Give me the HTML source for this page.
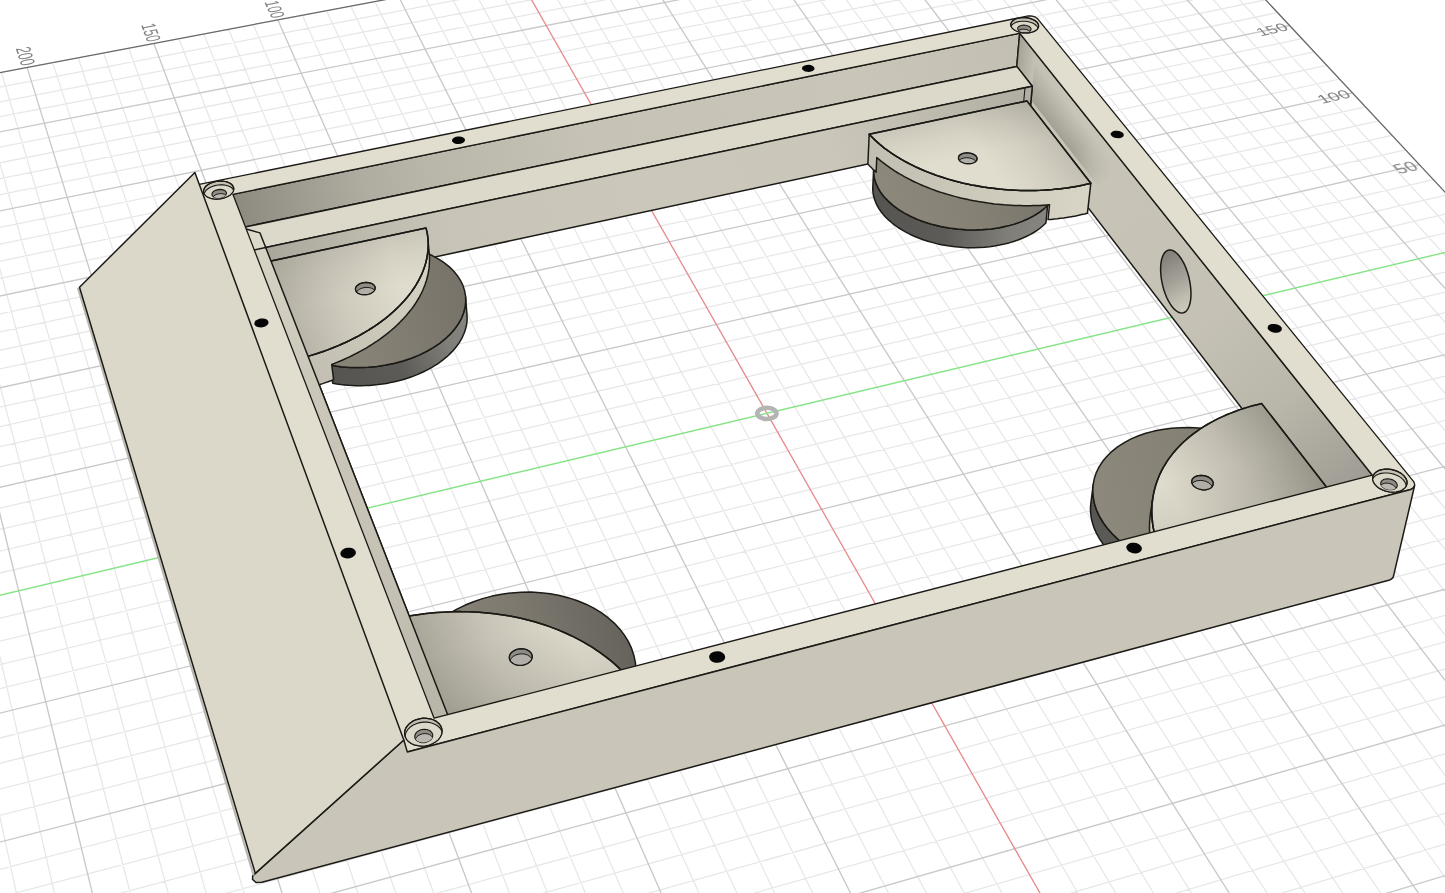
<!DOCTYPE html>
<html><head><meta charset="utf-8"><title>viewport</title>
<style>html,body{margin:0;padding:0;background:#fff;overflow:hidden}svg{display:block}text{font-family:"Liberation Sans",sans-serif}</style>
</head><body>
<svg width="1445" height="893" viewBox="0 0 1445 893">
<rect width="1445" height="893" fill="#fff"/>
<path d="M1133.4 -141.9L2130.1 926.3M1112.7 -137.9L2100.8 936M1091.9 -134L2071.4 945.8M1050 -126.1L2011.9 965.6M1028.9 -122.1L1981.8 975.6M1007.7 -118.1L1951.6 985.7M986.4 -114L1921.1 995.9M943.5 -105.9L1859.6 1016.4M922 -101.9L1828.5 1026.7M900.3 -97.8L1797.1 1037.1M878.6 -93.7L1765.6 1047.6M834.8 -85.4L1701.9 1068.9M812.8 -81.2L1669.7 1079.6M790.6 -77L1637.3 1090.4M768.4 -72.8L1604.6 1101.3M723.7 -64.4L1538.6 1123.2M701.1 -60.1L1505.3 1134.4M678.5 -55.8L1471.7 1145.5M655.8 -51.5L1437.8 1156.8M610 -42.9L1369.4 1179.6M587 -38.5L1334.8 1191.1M563.9 -34.1L1300 1202.7M540.6 -29.7L1264.9 1214.4M493.8 -20.9L1193.9 1238M470.3 -16.4L1158.1 1250M446.6 -11.9L1121.9 1262M422.8 -7.4L1085.5 1274.1M374.9 1.6L1011.9 1298.7M350.8 6.2L974.6 1311.1M326.6 10.7L937.1 1323.6M302.3 15.3L899.3 1336.2M253.3 24.6L822.8 1361.6M228.6 29.3L784.1 1374.5M203.9 34L745.2 1387.5M179 38.7L705.9 1400.6M128.8 48.2L626.4 1427.1M103.6 52.9L586.2 1440.5M78.2 57.7L545.6 1454M52.7 62.6L504.8 1467.6M1.4 72.3L422.1 1495.1M-24.5 77.2L380.2 1509M-50.5 82.1L338.1 1523.1M-76.6 87L295.5 1537.2M-129.1 96.9L209.5 1565.9M-155.6 102L165.9 1580.4M-182.2 107L122 1595M-209 112L77.7 1609.8M-262.8 122.2L-12 1639.7M-289.9 127.4L-57.4 1654.8M-317.2 132.5L-103.2 1670M-344.6 137.7L-149.3 1685.4M-399.8 148.1L-242.9 1716.5M-427.6 153.4L-290.2 1732.3M-455.5 158.7L-338 1748.2M-483.6 164L-386.1 1764.3M-540.2 174.7L-483.7 1796.8M-568.7 180.1L-533.2 1813.2M2130.1 926.3L-533.2 1813.2M2105.1 899.5L-534.2 1767.9M2080.5 873.2L-535.1 1723.5M2032.7 821.9L-537 1638M2009.5 797L-537.9 1596.6M1986.6 772.5L-538.8 1556.2M1964.1 748.4L-539.6 1516.7M1920.3 701.5L-541.3 1440.2M1899 678.6L-542.1 1403.2M1878 656.1L-542.9 1367M1857.4 634L-543.6 1331.5M1817.1 590.8L-545.1 1262.8M1797.5 569.8L-545.9 1229.4M1778.1 549.1L-546.6 1196.8M1759.1 528.7L-547.3 1164.8M1721.9 488.9L-548.6 1102.6M1703.8 469.4L-549.3 1072.5M1685.9 450.3L-549.9 1042.9M1668.3 431.4L-550.6 1013.8M1633.9 394.5L-551.8 957.4M1617.1 376.5L-552.4 930M1600.6 358.8L-553 903M1584.2 341.3L-553.5 876.6M1552.3 307.1L-554.7 825.1M1536.7 290.3L-555.2 800M1521.3 273.8L-555.7 775.4M1506.1 257.6L-556.3 751.2M1476.4 225.7L-557.3 704.1M1461.9 210.1L-557.8 681.1M1447.5 194.8L-558.3 658.5M1433.4 179.6L-558.8 636.3M1405.6 149.9L-559.7 592.9M1392.1 135.3L-560.2 571.8M1378.7 120.9L-560.6 551M1365.4 106.8L-561.1 530.5M1339.5 79L-561.9 490.5M1326.8 65.4L-562.4 471M1314.2 51.9L-562.8 451.7M1301.9 38.6L-563.2 432.8M1277.5 12.6L-564 395.8M1265.6 -0.2L-564.4 377.7M1253.9 -12.8L-564.8 359.9M1242.2 -25.3L-565.2 342.3M1219.4 -49.7L-565.9 308M1208.2 -61.7L-566.3 291.2M1197.1 -73.6L-566.6 274.6M1186.2 -85.3L-567 258.3M1164.7 -108.3L-567.7 226.4M1154.2 -119.6L-568 210.7M1143.7 -130.8L-568.4 195.3M1133.4 -141.9L-568.7 180.1" stroke="#e7e7e7" stroke-width="1.25" fill="none"/>
<path d="M1071 -130L2041.7 955.7M965 -110L1890.4 1006.1M856.8 -89.5L1733.9 1058.2M746.1 -68.6L1571.7 1112.2M633 -47.2L1403.7 1168.2M398.9 -2.9L1048.8 1286.4M277.9 20L861.2 1348.8M153.9 43.4L666.3 1413.8M27.1 67.4L463.6 1481.3M-102.8 92L252.7 1551.5M-235.8 117.1L33 1624.7M-372.1 142.9L-195.9 1700.9M-511.8 169.3L-434.7 1780.4M2056.4 847.3L-536.1 1680.3M1942.1 724.8L-540.5 1478M1837.1 612.3L-544.4 1296.8M1740.4 508.6L-548 1133.4M1651 412.8L-551.2 985.4M1568.2 324.1L-554.1 850.6M1419.4 164.6L-559.2 614.4M1352.4 92.8L-561.5 510.3M1289.6 25.5L-563.6 414.2M1230.7 -37.6L-565.5 325.1M1175.4 -96.9L-567.3 242.2" stroke="#c9c9c9" stroke-width="1.35" fill="none"/>
<path d="M517.3 -25.3L1229.6 1226.2" stroke="#e68a8a" stroke-width="1.3" fill="none"/>
<path d="M1491.2 241.5L-556.8 727.4" stroke="#86e386" stroke-width="1.4" fill="none"/>
<path d="M1133.4 -141.9L-568.7 180.1M1133.4 -141.9L2130.1 926.3" stroke="#686868" stroke-width="1.25" fill="none"/>
<ellipse cx="766.9" cy="413.4" rx="9.6" ry="5.6" fill="none" stroke="#b4b4b4" stroke-width="4.6"/>
<g filter="url(#noop)">
<text transform="matrix(0.4196 1.3558 -2.5639 0.4844 28.01 65.07)" font-size="7.9" text-anchor="end" dominant-baseline="central" fill="#808080" opacity="0.98">200</text>
<text transform="matrix(0.4962 1.3246 -2.5043 0.4732 154.71 41.13)" font-size="7.9" text-anchor="end" dominant-baseline="central" fill="#808080" opacity="0.98">150</text>
<text transform="matrix(0.5692 1.2944 -2.4467 0.4623 278.47 17.75)" font-size="7.9" text-anchor="end" dominant-baseline="central" fill="#808080" opacity="0.98">100</text>
<text transform="matrix(2.2196 -0.4655 1.2134 1.3032 1286.30 26.23)" font-size="7.9" text-anchor="end" dominant-baseline="central" fill="#808080" opacity="0.98">150</text>
<text transform="matrix(2.2777 -0.4969 1.2947 1.3905 1348.97 93.53)" font-size="7.9" text-anchor="end" dominant-baseline="central" fill="#808080" opacity="0.98">100</text>
<text transform="matrix(2.3387 -0.5316 1.3844 1.4868 1415.91 165.42)" font-size="7.9" text-anchor="end" dominant-baseline="central" fill="#808080" opacity="0.98">50</text>
</g>
<defs>
<filter id="noop" x="0" y="0" width="1445" height="893" filterUnits="userSpaceOnUse"><feOffset dx="0" dy="0"/></filter>
<linearGradient id="gbu" gradientUnits="userSpaceOnUse" x1="235.8" y1="214.7" x2="1018" y2="53"><stop offset="0" stop-color="#98958b"/><stop offset="0.1" stop-color="#a7a499"/><stop offset="0.25" stop-color="#b9b6aa"/><stop offset="0.45" stop-color="#c6c3b6"/><stop offset="0.8" stop-color="#c9c6b9"/><stop offset="1" stop-color="#c3c0b3"/></linearGradient>
<linearGradient id="ao1" gradientUnits="userSpaceOnUse" x1="235.4" y1="211.5" x2="362.7" y2="193"><stop offset="0" stop-color="rgb(90,88,79)" stop-opacity="0.18"/><stop offset="1" stop-color="rgb(90,88,79)" stop-opacity="0"/></linearGradient>
<linearGradient id="gr" gradientUnits="userSpaceOnUse" x1="1016" y1="75.3" x2="1362.7" y2="519.7"><stop offset="0" stop-color="#c4c1b4"/><stop offset="0.12" stop-color="#c8c5b8"/><stop offset="0.55" stop-color="#c5c2b5"/><stop offset="0.75" stop-color="#b9b6aa"/><stop offset="0.9" stop-color="#a5a399"/><stop offset="1" stop-color="#96948b"/></linearGradient>
<linearGradient id="mfg" gradientUnits="userSpaceOnUse" x1="1082.1" y1="145.1" x2="1108.9" y2="179.2"><stop offset="0" stop-color="#fff"/><stop offset="1" stop-color="#000"/></linearGradient><mask id="mfade" maskUnits="userSpaceOnUse" x="0" y="0" width="1445" height="893"><rect width="1445" height="893" fill="url(#mfg)"/></mask>
<linearGradient id="ao2" gradientUnits="userSpaceOnUse" x1="1062.2" y1="140" x2="1083.2" y2="123.7"><stop offset="0" stop-color="rgb(90,88,79)" stop-opacity="0.34"/><stop offset="1" stop-color="rgb(90,88,79)" stop-opacity="0"/></linearGradient>
<linearGradient id="ao3" gradientUnits="userSpaceOnUse" x1="1018.3" y1="49.9" x2="1035.6" y2="51.4"><stop offset="0" stop-color="rgb(90,88,79)" stop-opacity="0.3"/><stop offset="1" stop-color="rgb(90,88,79)" stop-opacity="0"/></linearGradient>
<linearGradient id="gbl" gradientUnits="userSpaceOnUse" x1="269.4" y1="274.8" x2="1029.8" y2="112.8"><stop offset="0" stop-color="#a9a69b"/><stop offset="0.12" stop-color="#bbb8ac"/><stop offset="0.24" stop-color="#c8c5b8"/><stop offset="0.5" stop-color="#cbc8bb"/><stop offset="0.74" stop-color="#cac7ba"/><stop offset="0.86" stop-color="#c0bdb0"/><stop offset="1" stop-color="#b0ada2"/></linearGradient>
<linearGradient id="gh" gradientUnits="userSpaceOnUse" x1="1161.7" y1="259.5" x2="1189.7" y2="307.5"><stop offset="0" stop-color="#84827b"/><stop offset="0.45" stop-color="#a3a197"/><stop offset="0.8" stop-color="#c0bdb1"/><stop offset="1" stop-color="#cdc9bc"/></linearGradient>
<linearGradient id="gfsTL" gradientUnits="userSpaceOnUse" x1="332.7" y1="383.2" x2="467" y2="315.2"><stop offset="0" stop-color="#555450"/><stop offset="0.45" stop-color="#5c5b57"/><stop offset="0.8" stop-color="#7f7e78"/><stop offset="1" stop-color="#86857f"/></linearGradient>
<linearGradient id="gftTL" gradientUnits="userSpaceOnUse" x1="270.3" y1="325" x2="462" y2="283.3"><stop offset="0" stop-color="#8d887c"/><stop offset="0.5" stop-color="#868175"/><stop offset="1" stop-color="#77736a"/></linearGradient>
<linearGradient id="gtsTL" gradientUnits="userSpaceOnUse" x1="427.6" y1="245.6" x2="307" y2="375"><stop offset="0" stop-color="#d8d4c6"/><stop offset="0.5" stop-color="#ccc8ba"/><stop offset="1" stop-color="#c2beb1"/></linearGradient>
<linearGradient id="ao4" gradientUnits="userSpaceOnUse" x1="355.2" y1="243.1" x2="365.6" y2="292.2"><stop offset="0" stop-color="rgb(90,88,79)" stop-opacity="0.16"/><stop offset="0.45" stop-color="rgb(90,88,79)" stop-opacity="0.07200000000000001"/><stop offset="1" stop-color="rgb(90,88,79)" stop-opacity="0"/></linearGradient>
<linearGradient id="ao5" gradientUnits="userSpaceOnUse" x1="287.4" y1="312.5" x2="394.9" y2="270.8"><stop offset="0" stop-color="rgb(90,88,79)" stop-opacity="0.3"/><stop offset="0.45" stop-color="rgb(90,88,79)" stop-opacity="0.135"/><stop offset="1" stop-color="rgb(90,88,79)" stop-opacity="0"/></linearGradient>
<clipPath id="thTL"><path d="M355.7 290.7 L355.4 289 L355.8 287.3 L356.9 285.7 L358.7 284.4 L360.9 283.3 L363.5 282.6 L366.2 282.4 L368.8 282.6 L371.2 283.3 L373.1 284.3 L374.5 285.7 L375.2 287.3 L375.1 289 L374.4 290.6 L372.9 292.1 L370.9 293.4 L368.5 294.3 L365.8 294.7 L363.1 294.7 L360.5 294.3 L358.4 293.4 L356.7 292.2 L355.7 290.7Z"/></clipPath>
<linearGradient id="gfsTR" gradientUnits="userSpaceOnUse" x1="872.8" y1="187.3" x2="1045.9" y2="223"><stop offset="0" stop-color="#555450"/><stop offset="0.45" stop-color="#5c5b57"/><stop offset="0.8" stop-color="#7f7e78"/><stop offset="1" stop-color="#86857f"/></linearGradient>
<linearGradient id="gftTR" gradientUnits="userSpaceOnUse" x1="880.6" y1="192.1" x2="1051" y2="155"><stop offset="0" stop-color="#8d887c"/><stop offset="0.5" stop-color="#868175"/><stop offset="1" stop-color="#77736a"/></linearGradient>
<linearGradient id="gtsTR" gradientUnits="userSpaceOnUse" x1="1088.8" y1="200.7" x2="868.4" y2="151.5"><stop offset="0" stop-color="#d8d4c6"/><stop offset="0.5" stop-color="#ccc8ba"/><stop offset="1" stop-color="#c2beb1"/></linearGradient>
<linearGradient id="ao6" gradientUnits="userSpaceOnUse" x1="944.7" y1="118.3" x2="953.5" y2="159.5"><stop offset="0" stop-color="rgb(90,88,79)" stop-opacity="0.16"/><stop offset="0.45" stop-color="rgb(90,88,79)" stop-opacity="0.07200000000000001"/><stop offset="1" stop-color="rgb(90,88,79)" stop-opacity="0"/></linearGradient>
<linearGradient id="ao7" gradientUnits="userSpaceOnUse" x1="1060.9" y1="144.7" x2="1006.3" y2="187.1"><stop offset="0" stop-color="rgb(90,88,79)" stop-opacity="0.22"/><stop offset="0.45" stop-color="rgb(90,88,79)" stop-opacity="0.099"/><stop offset="1" stop-color="rgb(90,88,79)" stop-opacity="0"/></linearGradient>
<clipPath id="thTR"><path d="M959.2 160.1 L958.5 158.7 L958.5 157.2 L959.1 155.8 L960.5 154.5 L962.3 153.6 L964.6 153 L967 152.8 L969.6 153 L972 153.6 L974.1 154.5 L975.7 155.7 L976.7 157.1 L977.1 158.6 L976.8 160.1 L975.8 161.4 L974.2 162.5 L972.1 163.3 L969.7 163.7 L967.1 163.7 L964.6 163.3 L962.4 162.5 L960.5 161.5 L959.2 160.1Z"/></clipPath>
<linearGradient id="gfsR" gradientUnits="userSpaceOnUse" x1="1090.9" y1="502.9" x2="1153" y2="580.2"><stop offset="0" stop-color="#555450"/><stop offset="0.45" stop-color="#5c5b57"/><stop offset="0.8" stop-color="#7f7e78"/><stop offset="1" stop-color="#86857f"/></linearGradient>
<linearGradient id="gftR" gradientUnits="userSpaceOnUse" x1="1103.5" y1="523" x2="1294.6" y2="473.9"><stop offset="0" stop-color="#8d887c"/><stop offset="0.5" stop-color="#868175"/><stop offset="1" stop-color="#77736a"/></linearGradient>
<linearGradient id="gtsR" gradientUnits="userSpaceOnUse" x1="1183" y1="608.6" x2="1258.6" y2="421.4"><stop offset="0" stop-color="#d8d4c6"/><stop offset="0.5" stop-color="#ccc8ba"/><stop offset="1" stop-color="#c2beb1"/></linearGradient>
<linearGradient id="ao8" gradientUnits="userSpaceOnUse" x1="1308.9" y1="464.4" x2="1208" y2="542.7"><stop offset="0" stop-color="rgb(90,88,79)" stop-opacity="0.5"/><stop offset="0.45" stop-color="rgb(90,88,79)" stop-opacity="0.225"/><stop offset="1" stop-color="rgb(90,88,79)" stop-opacity="0"/></linearGradient>
<linearGradient id="ao9" gradientUnits="userSpaceOnUse" x1="1247.6" y1="532.6" x2="1229.8" y2="464.3"><stop offset="0" stop-color="rgb(90,88,79)" stop-opacity="0.18"/><stop offset="0.45" stop-color="rgb(90,88,79)" stop-opacity="0.081"/><stop offset="1" stop-color="rgb(90,88,79)" stop-opacity="0"/></linearGradient>
<clipPath id="thR"><path d="M1192.9 485 L1191.9 483.1 L1191.7 481.1 L1192.3 479.2 L1193.7 477.6 L1195.7 476.4 L1198.2 475.6 L1201.1 475.3 L1204 475.6 L1206.8 476.4 L1209.3 477.6 L1211.3 479.2 L1212.7 481.1 L1213.3 483 L1213.1 485 L1212.1 486.7 L1210.4 488.2 L1208.2 489.2 L1205.4 489.8 L1202.5 489.8 L1199.6 489.2 L1196.9 488.2 L1194.6 486.8 L1192.9 485Z"/></clipPath>
<linearGradient id="gfsBL" gradientUnits="userSpaceOnUse" x1="631.6" y1="714" x2="636.5" y2="687.9"><stop offset="0" stop-color="#555450"/><stop offset="0.45" stop-color="#5c5b57"/><stop offset="0.8" stop-color="#7f7e78"/><stop offset="1" stop-color="#86857f"/></linearGradient>
<linearGradient id="gftBL" gradientUnits="userSpaceOnUse" x1="411.2" y1="701.2" x2="630.1" y2="645"><stop offset="0" stop-color="#8e897d"/><stop offset="0.55" stop-color="#7d796f"/><stop offset="1" stop-color="#66635c"/></linearGradient>
<linearGradient id="gtsBL" gradientUnits="userSpaceOnUse" x1="407.3" y1="634.9" x2="658.8" y2="748.9"><stop offset="0" stop-color="#d8d4c6"/><stop offset="0.5" stop-color="#ccc8ba"/><stop offset="1" stop-color="#c2beb1"/></linearGradient>
<linearGradient id="ao10" gradientUnits="userSpaceOnUse" x1="433.3" y1="688.6" x2="573.3" y2="634.3"><stop offset="0" stop-color="rgb(90,88,79)" stop-opacity="0.42"/><stop offset="0.45" stop-color="rgb(90,88,79)" stop-opacity="0.189"/><stop offset="1" stop-color="rgb(90,88,79)" stop-opacity="0"/></linearGradient>
<linearGradient id="ao11" gradientUnits="userSpaceOnUse" x1="557.2" y1="713.1" x2="535.1" y2="628.2"><stop offset="0" stop-color="rgb(90,88,79)" stop-opacity="0.2"/><stop offset="0.45" stop-color="rgb(90,88,79)" stop-opacity="0.09000000000000001"/><stop offset="1" stop-color="rgb(90,88,79)" stop-opacity="0"/></linearGradient>
<clipPath id="thBL"><path d="M509.7 659.8 L509.3 657.6 L509.6 655.3 L510.8 653.2 L512.7 651.4 L515.3 649.9 L518.2 649 L521.3 648.7 L524.4 649 L527.2 649.9 L529.5 651.3 L531.2 653.2 L532.1 655.3 L532.2 657.5 L531.4 659.8 L529.8 661.8 L527.6 663.5 L524.8 664.6 L521.8 665.3 L518.6 665.3 L515.7 664.7 L513.1 663.5 L511 661.8 L509.7 659.8Z"/></clipPath>
<linearGradient id="gls" gradientUnits="userSpaceOnUse" x1="265.7" y1="247.5" x2="460.5" y2="747.7"><stop offset="0" stop-color="#d6d2c4"/><stop offset="0.25" stop-color="#cbc7ba"/><stop offset="0.7" stop-color="#c4c0b3"/><stop offset="1" stop-color="#b4b1a5"/></linearGradient>
<clipPath id="cb1"><path d="M203.8 193.1 L203.5 191.3 L203.8 189.5 L204.7 187.7 L206.1 186 L208.1 184.5 L210.5 183.2 L213.2 182.2 L216.2 181.5 L219.3 181.1 L222.3 181.1 L225.2 181.5 L227.8 182.2 L230 183.3 L231.8 184.6 L233 186.2 L233.7 187.9 L233.7 189.7 L233.2 191.5 L232 193.2 L230.3 194.9 L228.1 196.3 L225.5 197.5 L222.6 198.4 L219.6 198.9 L216.5 199.1 L213.5 198.8 L210.7 198.3 L208.3 197.4 L206.2 196.2 L204.7 194.7 L203.8 193.1Z"/></clipPath>
<clipPath id="cbh1"><path d="M212.1 195.2 L211.9 194.1 L212.3 192.9 L213.2 191.8 L214.6 190.8 L216.2 190.1 L218.1 189.6 L220.1 189.4 L222 189.6 L223.7 190.1 L225.1 190.8 L226 191.8 L226.5 192.9 L226.3 194 L225.7 195.2 L224.6 196.2 L223 197.1 L221.2 197.7 L219.3 198 L217.3 198 L215.5 197.7 L213.9 197.1 L212.7 196.3 L212.1 195.2Z"/></clipPath>
<clipPath id="cb2"><path d="M1012 27.8 L1011.1 26.3 L1010.8 24.7 L1011 23.2 L1011.8 21.8 L1013.1 20.5 L1014.9 19.3 L1017 18.5 L1019.5 17.9 L1022.2 17.6 L1025 17.6 L1027.8 17.9 L1030.5 18.6 L1032.9 19.5 L1035 20.6 L1036.7 21.9 L1037.9 23.4 L1038.5 24.9 L1038.6 26.5 L1038.1 28 L1037.1 29.4 L1035.5 30.6 L1033.5 31.6 L1031.2 32.3 L1028.5 32.8 L1025.7 32.9 L1022.9 32.8 L1020.2 32.3 L1017.6 31.5 L1015.3 30.5 L1013.4 29.2 L1012 27.8Z"/></clipPath>
<clipPath id="cbh2"><path d="M1018.3 30.1 L1017.8 29.1 L1017.7 28.1 L1018.2 27.1 L1019.1 26.3 L1020.4 25.7 L1022 25.3 L1023.8 25.1 L1025.6 25.3 L1027.3 25.7 L1028.8 26.3 L1030 27.1 L1030.8 28.1 L1031.1 29.1 L1030.8 30.1 L1030.2 31 L1029 31.7 L1027.6 32.2 L1025.9 32.5 L1024 32.5 L1022.2 32.2 L1020.6 31.7 L1019.3 31 L1018.3 30.1Z"/></clipPath>
<clipPath id="cb3"><path d="M1374.9 484.4 L1373.5 482.1 L1372.7 479.8 L1372.6 477.5 L1373.3 475.4 L1374.6 473.4 L1376.5 471.7 L1379 470.4 L1381.9 469.6 L1385.2 469.1 L1388.6 469.1 L1392.1 469.6 L1395.5 470.6 L1398.6 471.9 L1401.4 473.6 L1403.8 475.6 L1405.5 477.8 L1406.7 480.1 L1407.1 482.4 L1406.8 484.6 L1405.9 486.7 L1404.2 488.6 L1402 490.1 L1399.3 491.2 L1396.2 491.9 L1392.8 492.1 L1389.3 491.8 L1385.8 491.1 L1382.5 489.9 L1379.5 488.4 L1376.9 486.5 L1374.9 484.4Z"/></clipPath>
<clipPath id="cbh3"><path d="M1381.8 486.2 L1380.9 484.7 L1380.7 483.2 L1381 481.8 L1382 480.6 L1383.4 479.6 L1385.3 479 L1387.4 478.8 L1389.7 479 L1391.9 479.6 L1393.9 480.6 L1395.5 481.8 L1396.6 483.2 L1397.2 484.7 L1397.2 486.2 L1396.5 487.5 L1395.3 488.6 L1393.6 489.4 L1391.6 489.8 L1389.4 489.8 L1387.1 489.4 L1385 488.7 L1383.2 487.6 L1381.8 486.2Z"/></clipPath>
<clipPath id="cb4"><path d="M405.2 736.8 L404.6 734 L404.7 731.2 L405.6 728.4 L407.3 725.8 L409.6 723.4 L412.4 721.4 L415.7 719.8 L419.3 718.8 L423.1 718.2 L426.8 718.3 L430.4 718.8 L433.8 720 L436.7 721.6 L439.1 723.7 L440.8 726 L441.8 728.7 L442.1 731.5 L441.6 734.3 L440.3 737 L438.4 739.6 L435.8 741.8 L432.7 743.6 L429.2 745 L425.5 745.8 L421.7 746.1 L417.9 745.7 L414.4 744.9 L411.2 743.5 L408.6 741.6 L406.5 739.3 L405.2 736.8Z"/></clipPath>
<clipPath id="cbh4"><path d="M415 738.2 L414.7 736.4 L415.1 734.6 L416.1 732.9 L417.6 731.4 L419.6 730.2 L421.9 729.5 L424.4 729.2 L426.8 729.5 L429 730.2 L430.7 731.3 L432 732.8 L432.7 734.5 L432.7 736.4 L432 738.2 L430.7 739.8 L428.9 741.1 L426.7 742.1 L424.3 742.6 L421.8 742.6 L419.5 742.1 L417.5 741.1 L416 739.8 L415 738.2Z"/></clipPath>
</defs>
<path d="M210 199 L1019.7 33.2 L1016.8 66.4 L215.2 233.2Z" fill="url(#gbu)" stroke="#1b1a16" stroke-width="1.5" stroke-linejoin="round" />
<path d="M210 199 L359.8 168.3 L363.4 202.4 L215.2 233.2Z" fill="url(#ao1)"/>
<path d="M1019.7 33.2 L1380.7 485.7 L1362.9 566.3 L1028.3 129.6 L1032.3 86.2 L1016.8 66.4Z" fill="url(#gr)" stroke="#1b1a16" stroke-width="1.5" stroke-linejoin="round" />
<g mask="url(#mfade)">
<path d="M1035.4 52.9 L1112.4 149.4 L1106.7 197.3 L1031 100Z" fill="url(#ao2)"/>
</g>
<path d="M1019.7 33.2 L1054 76.2 L1050.7 109.6 L1016.8 66.4Z" fill="url(#ao3)"/>
<path d="M215.2 233.2 L1016.8 66.4 L1032.3 86.2 L265.7 247.5 L465.4 760.2 L414.9 773.5Z" fill="#dcd8ca" stroke="#1b1a16" stroke-width="1.5" stroke-linejoin="round" />
<path d="M265.7 247.5 L1032.3 86.2 L1028.3 129.6 L271.8 292Z" fill="url(#gbl)" stroke="#1b1a16" stroke-width="1.5" stroke-linejoin="round" />
<path d="M1025 87.8 L1023.7 101.5" fill="none" stroke="#1b1a16" stroke-width="1.1" stroke-linecap="round" stroke-linejoin="round" />
<path d="M1161 262.8 L1161.6 259.6 L1162.4 256.9 L1163.5 254.5 L1164.7 252.6 L1166.2 251.2 L1167.8 250.3 L1169.6 249.9 L1171.4 250.1 L1173.4 250.8 L1175.3 252 L1177.3 253.8 L1179.3 256 L1181.2 258.7 L1183.1 261.8 L1184.8 265.2 L1186.3 268.9 L1187.7 272.9 L1188.8 277 L1189.7 281.1 L1190.4 285.3 L1190.8 289.4 L1191 293.4 L1190.9 297.1 L1190.5 300.6 L1189.9 303.8 L1189 306.5 L1187.9 308.8 L1186.6 310.7 L1185.2 312 L1183.5 312.8 L1181.7 313.1 L1179.9 312.8 L1177.9 312 L1176 310.7 L1174 308.9 L1172 306.6 L1170.2 303.9 L1168.4 300.9 L1166.7 297.5 L1165.2 293.8 L1163.9 290 L1162.8 286 L1161.9 281.9 L1161.2 277.8 L1160.8 273.8 L1160.6 269.9 L1160.7 266.2Z" fill="url(#gh)" stroke="#1b1a16" stroke-width="1.5" stroke-linejoin="round" />
<path d="M465.6 297.3 L465.7 299.9 L465.7 302.4 L465.4 305 L465 307.6 L464.4 310.2 L463.6 312.7 L462.7 315.3 L461.6 317.9 L460.3 320.4 L458.9 322.9 L457.3 325.4 L455.6 327.8 L453.6 330.2 L451.6 332.6 L449.3 334.9 L447 337.2 L444.5 339.4 L441.8 341.6 L439 343.7 L436.1 345.7 L433 347.7 L429.8 349.6 L426.6 351.4 L423.2 353.1 L419.7 354.8 L416 356.3 L412.4 357.8 L408.6 359.2 L404.7 360.5 L400.8 361.7 L396.8 362.7 L392.8 363.7 L388.7 364.6 L384.5 365.3 L380.3 366 L376.1 366.6 L371.9 367 L367.7 367.3 L363.5 367.5 L359.3 367.6 L355 367.6 L350.9 367.5 L346.7 367.2 L342.6 366.9 L338.5 366.4 L334.5 365.8 L330.5 365.2 L332.7 383.2 L336.7 383.9 L340.7 384.5 L344.7 384.9 L348.8 385.3 L352.9 385.5 L357.1 385.7 L361.3 385.7 L365.5 385.6 L369.7 385.4 L373.9 385 L378.1 384.6 L382.3 384.1 L386.4 383.4 L390.5 382.6 L394.6 381.8 L398.6 380.8 L402.6 379.7 L406.5 378.5 L410.3 377.2 L414.1 375.9 L417.8 374.4 L421.3 372.8 L424.8 371.2 L428.2 369.4 L431.5 367.6 L434.6 365.7 L437.7 363.8 L440.6 361.7 L443.3 359.6 L446 357.4 L448.5 355.2 L450.8 352.9 L453.1 350.6 L455.1 348.2 L457 345.8 L458.8 343.4 L460.3 340.9 L461.8 338.4 L463 335.8 L464.1 333.3 L465 330.7 L465.8 328.1 L466.4 325.5 L466.8 323 L467.1 320.4 L467.1 317.8 L467 315.2Z" fill="url(#gfsTL)" stroke="#1b1a16" stroke-width="1.5" stroke-linejoin="round" />
<path d="M270.3 325 L268.7 319.7 L267.8 314.3 L267.8 308.8 L268.5 303.3 L270 297.9 L272.3 292.5 L275.3 287.2 L278.9 282.1 L283.3 277.2 L288.2 272.5 L293.8 268.1 L299.9 263.9 L306.5 260.1 L313.5 256.6 L320.9 253.5 L328.7 250.8 L336.7 248.5 L345 246.7 L353.4 245.2 L361.9 244.3 L370.4 243.7 L378.9 243.7 L387.3 244.1 L395.6 244.9 L403.6 246.2 L411.4 248 L418.8 250.2 L425.9 252.8 L432.6 255.8 L438.7 259.1 L444.3 262.9 L449.4 266.9 L453.8 271.3 L457.6 275.9 L460.7 280.8 L463.1 285.9 L464.7 291.1 L465.6 296.4 L465.7 301.9 L465 307.4 L463.6 312.8 L461.4 318.3 L458.5 323.6 L454.8 328.8 L450.4 333.9 L445.3 338.7 L439.6 343.3 L433.2 347.6 L426.4 351.5 L419 355.1 L411.2 358.3 L403 361 L394.5 363.3 L385.8 365.1 L376.9 366.5 L367.9 367.3 L358.9 367.6 L350 367.4 L341.2 366.7 L332.6 365.5 L324.3 363.8 L316.4 361.7 L308.9 359 L301.9 356 L295.4 352.5 L289.5 348.7 L284.2 344.5 L279.6 340 L275.8 335.2 L272.6 330.2 L270.3 325Z" fill="url(#gftTL)" stroke="#1b1a16" stroke-width="1.5" stroke-linejoin="round" />
<path d="M427.9 239.1 L428 240.8 L428.1 242.5 L428.2 244.3 L428.1 246 L428.1 247.8 L428 249.5 L427.8 251.3 L427.6 253.1 L427.4 254.8 L427.1 256.6 L426.7 258.4 L426.4 260.2 L425.9 261.9 L425.4 263.7 L424.9 265.5 L424.3 267.3 L423.7 269 L423 270.8 L422.3 272.6 L421.6 274.4 L420.8 276.1 L419.9 277.9 L419 279.6 L418.1 281.4 L417.1 283.1 L416 284.9 L414.9 286.6 L413.8 288.3 L412.6 290.1 L411.4 291.8 L410.1 293.5 L408.8 295.2 L407.5 296.9 L406.1 298.6 L404.6 300.2 L403.1 301.9 L401.6 303.6 L400 305.2 L398.4 306.8 L396.8 308.4 L395.1 310 L393.3 311.6 L391.5 313.2 L389.7 314.8 L387.9 316.3 L386 317.9 L384 319.4 L382 320.9 L380 322.4 L378 323.8 L375.9 325.3 L373.7 326.7 L371.6 328.1 L369.4 329.5 L367.1 330.9 L364.9 332.3 L362.6 333.6 L360.2 334.9 L357.9 336.2 L355.5 337.5 L353 338.7 L350.6 340 L348.1 341.2 L345.5 342.4 L343 343.5 L340.4 344.7 L337.8 345.8 L335.2 346.9 L332.5 347.9 L329.8 349 L327.1 350 L324.4 351 L321.6 352 L318.9 352.9 L316.1 353.8 L313.2 354.7 L310.4 355.6 L307.6 356.4 L304.7 357.2 L308.7 387.9 L311.5 387.1 L314.3 386.2 L317.1 385.4 L319.9 384.5 L322.7 383.6 L325.5 382.6 L328.2 381.7 L330.9 380.7 L333.6 379.6 L331.7 364.5 L334.4 363.5 L337 362.4 L339.7 361.3 L342.2 360.2 L344.8 359 L347.3 357.9 L349.9 356.7 L352.3 355.5 L354.8 354.2 L357.2 353 L359.6 351.7 L362 350.4 L364.3 349.1 L366.6 347.8 L368.8 346.4 L371.1 345 L373.2 343.6 L375.4 342.2 L377.5 340.8 L379.6 339.3 L381.6 337.8 L383.6 336.3 L385.6 334.8 L387.5 333.3 L389.4 331.8 L391.3 330.2 L393.1 328.7 L394.9 327.1 L396.6 325.5 L398.3 323.9 L399.9 322.3 L401.5 320.6 L403.1 319 L404.6 317.3 L406.1 315.7 L407.5 314 L408.9 312.3 L410.3 310.6 L411.6 308.9 L412.9 307.2 L414.1 305.5 L415.2 303.8 L416.4 302 L417.4 300.3 L418.5 298.5 L419.5 296.8 L420.4 295 L421.3 293.3 L422.2 291.5 L423 289.7 L423.7 288 L424.4 286.2 L425.1 284.4 L425.7 282.6 L426.3 280.9 L426.8 279.1 L427.3 277.3 L427.7 275.5 L428.1 273.7 L428.4 272 L428.7 270.2 L429 268.4 L429.2 266.6 L429.3 264.9 L429.4 263.1 L429.5 261.4 L429.5 259.6 L429.5 257.8 L429.4 256.1 L429.3 254.4Z" fill="url(#gtsTL)" stroke="#1b1a16" stroke-width="1.5" stroke-linejoin="round" />
<path d="M267.6 261.7 L426 228.1 L426.6 230.4 L427.1 232.7 L427.5 235 L427.8 237.4 L428 239.7 L428.1 242.1 L428.2 244.4 L428.1 246.8 L428 249.2 L427.8 251.6 L427.5 254 L427.1 256.4 L426.7 258.8 L426.1 261.2 L425.5 263.6 L424.8 266 L423.9 268.4 L423.1 270.8 L422.1 273.2 L421 275.6 L419.8 278 L418.6 280.4 L417.3 282.7 L415.9 285.1 L414.4 287.5 L412.8 289.8 L411.2 292.1 L409.4 294.4 L407.6 296.7 L405.7 299 L403.7 301.3 L401.6 303.5 L399.5 305.7 L397.3 307.9 L395 310.1 L392.6 312.3 L390.2 314.4 L387.7 316.5 L385.1 318.6 L382.4 320.6 L379.7 322.6 L376.9 324.6 L374 326.6 L371 328.5 L368 330.4 L365 332.2 L361.8 334 L358.7 335.8 L355.4 337.5 L352.1 339.2 L348.7 340.9 L345.3 342.5 L341.8 344 L338.3 345.6 L334.8 347 L331.1 348.5 L327.5 349.9 L323.8 351.2 L320 352.5 L316.3 353.8 L312.4 354.9 L308.6 356.1 L304.7 357.2Z" fill="#dfdbcd" stroke="#1b1a16" stroke-width="1.5" stroke-linejoin="round" />
<path d="M267.6 261.7 L426 228.1 L426.6 230.4 L427.1 232.7 L427.5 235 L427.8 237.4 L428 239.7 L428.1 242.1 L428.2 244.4 L428.1 246.8 L428 249.2 L427.8 251.6 L427.5 254 L427.1 256.4 L426.7 258.8 L426.1 261.2 L425.5 263.6 L424.8 266 L423.9 268.4 L423.1 270.8 L422.1 273.2 L421 275.6 L419.8 278 L418.6 280.4 L417.3 282.7 L415.9 285.1 L414.4 287.5 L412.8 289.8 L411.2 292.1 L409.4 294.4 L407.6 296.7 L405.7 299 L403.7 301.3 L401.6 303.5 L399.5 305.7 L397.3 307.9 L395 310.1 L392.6 312.3 L390.2 314.4 L387.7 316.5 L385.1 318.6 L382.4 320.6 L379.7 322.6 L376.9 324.6 L374 326.6 L371 328.5 L368 330.4 L365 332.2 L361.8 334 L358.7 335.8 L355.4 337.5 L352.1 339.2 L348.7 340.9 L345.3 342.5 L341.8 344 L338.3 345.6 L334.8 347 L331.1 348.5 L327.5 349.9 L323.8 351.2 L320 352.5 L316.3 353.8 L312.4 354.9 L308.6 356.1 L304.7 357.2Z" fill="url(#ao4)"/>
<path d="M267.6 261.7 L426 228.1 L426.6 230.4 L427.1 232.7 L427.5 235 L427.8 237.4 L428 239.7 L428.1 242.1 L428.2 244.4 L428.1 246.8 L428 249.2 L427.8 251.6 L427.5 254 L427.1 256.4 L426.7 258.8 L426.1 261.2 L425.5 263.6 L424.8 266 L423.9 268.4 L423.1 270.8 L422.1 273.2 L421 275.6 L419.8 278 L418.6 280.4 L417.3 282.7 L415.9 285.1 L414.4 287.5 L412.8 289.8 L411.2 292.1 L409.4 294.4 L407.6 296.7 L405.7 299 L403.7 301.3 L401.6 303.5 L399.5 305.7 L397.3 307.9 L395 310.1 L392.6 312.3 L390.2 314.4 L387.7 316.5 L385.1 318.6 L382.4 320.6 L379.7 322.6 L376.9 324.6 L374 326.6 L371 328.5 L368 330.4 L365 332.2 L361.8 334 L358.7 335.8 L355.4 337.5 L352.1 339.2 L348.7 340.9 L345.3 342.5 L341.8 344 L338.3 345.6 L334.8 347 L331.1 348.5 L327.5 349.9 L323.8 351.2 L320 352.5 L316.3 353.8 L312.4 354.9 L308.6 356.1 L304.7 357.2Z" fill="url(#ao5)"/>
<path d="M267.6 261.7 L426 228.1 L426.6 230.4 L427.1 232.7 L427.5 235 L427.8 237.4 L428 239.7 L428.1 242.1 L428.2 244.4 L428.1 246.8 L428 249.2 L427.8 251.6 L427.5 254 L427.1 256.4 L426.7 258.8 L426.1 261.2 L425.5 263.6 L424.8 266 L423.9 268.4 L423.1 270.8 L422.1 273.2 L421 275.6 L419.8 278 L418.6 280.4 L417.3 282.7 L415.9 285.1 L414.4 287.5 L412.8 289.8 L411.2 292.1 L409.4 294.4 L407.6 296.7 L405.7 299 L403.7 301.3 L401.6 303.5 L399.5 305.7 L397.3 307.9 L395 310.1 L392.6 312.3 L390.2 314.4 L387.7 316.5 L385.1 318.6 L382.4 320.6 L379.7 322.6 L376.9 324.6 L374 326.6 L371 328.5 L368 330.4 L365 332.2 L361.8 334 L358.7 335.8 L355.4 337.5 L352.1 339.2 L348.7 340.9 L345.3 342.5 L341.8 344 L338.3 345.6 L334.8 347 L331.1 348.5 L327.5 349.9 L323.8 351.2 L320 352.5 L316.3 353.8 L312.4 354.9 L308.6 356.1 L304.7 357.2 L267.6 261.7" fill="none" stroke="#1b1a16" stroke-width="1.5" stroke-linecap="round" stroke-linejoin="round" />
<path d="M355.7 290.7 L355.4 289 L355.8 287.3 L356.9 285.7 L358.7 284.4 L360.9 283.3 L363.5 282.6 L366.2 282.4 L368.8 282.6 L371.2 283.3 L373.1 284.3 L374.5 285.7 L375.2 287.3 L375.1 289 L374.4 290.6 L372.9 292.1 L370.9 293.4 L368.5 294.3 L365.8 294.7 L363.1 294.7 L360.5 294.3 L358.4 293.4 L356.7 292.2 L355.7 290.7Z" fill="#8e8c85" stroke="#1b1a16" stroke-width="1.2" stroke-linejoin="round" />
<g clip-path="url(#thTL)">
<path d="M356.2 295.7 L355.9 294 L356.4 292.3 L357.5 290.7 L359.2 289.4 L361.5 288.3 L364 287.6 L366.7 287.4 L369.4 287.6 L371.7 288.3 L373.7 289.3 L375 290.7 L375.7 292.3 L375.7 294 L374.9 295.6 L373.4 297.1 L371.4 298.4 L369 299.3 L366.3 299.7 L363.6 299.7 L361.1 299.3 L358.9 298.4 L357.3 297.2 L356.2 295.7Z" fill="#b0aea6" stroke="#1b1a16" stroke-width="1.0" stroke-linejoin="round" />
</g>
<path d="M355.7 290.7 L355.4 289 L355.8 287.3 L356.9 285.7 L358.7 284.4 L360.9 283.3 L363.5 282.6 L366.2 282.4 L368.8 282.6 L371.2 283.3 L373.1 284.3 L374.5 285.7 L375.2 287.3 L375.1 289 L374.4 290.6 L372.9 292.1 L370.9 293.4 L368.5 294.3 L365.8 294.7 L363.1 294.7 L360.5 294.3 L358.4 293.4 L356.7 292.2 L355.7 290.7 L355.7 290.7" fill="none" stroke="#1b1a16" stroke-width="1.2" stroke-linecap="round" stroke-linejoin="round" />
<path d="M1047.7 205.3 L1045 207.8 L1042.1 210.3 L1038.9 212.6 L1035.5 214.8 L1031.8 216.9 L1027.9 218.8 L1023.9 220.6 L1019.6 222.3 L1015.2 223.8 L1010.7 225.1 L1005.9 226.3 L1001.1 227.4 L996.1 228.2 L991.1 228.9 L985.9 229.4 L980.7 229.8 L975.5 229.9 L970.2 229.9 L964.9 229.7 L959.7 229.3 L954.4 228.8 L949.2 228.1 L944 227.2 L939 226.1 L934 224.9 L929.1 223.5 L924.4 222 L919.7 220.3 L915.3 218.5 L911 216.5 L906.9 214.4 L902.9 212.2 L899.2 209.8 L895.7 207.4 L892.5 204.8 L889.4 202.2 L886.6 199.5 L884.1 196.7 L881.8 193.8 L879.8 190.9 L878.1 187.9 L876.7 184.9 L875.5 181.9 L874.6 178.9 L874 175.8 L873.7 172.8 L873.6 169.7 L872.8 187.3 L872.8 190.4 L873.1 193.4 L873.7 196.5 L874.6 199.5 L875.8 202.6 L877.2 205.6 L878.9 208.6 L880.9 211.5 L883.2 214.4 L885.7 217.2 L888.5 219.9 L891.5 222.5 L894.7 225.1 L898.2 227.5 L901.9 229.9 L905.8 232.1 L909.9 234.2 L914.2 236.2 L918.6 238 L923.2 239.7 L927.9 241.3 L932.8 242.6 L937.7 243.9 L942.8 244.9 L947.9 245.8 L953.1 246.5 L958.3 247.1 L963.6 247.5 L968.8 247.7 L974.1 247.7 L979.3 247.5 L984.5 247.2 L989.6 246.7 L994.6 246 L999.5 245.1 L1004.3 244.1 L1009 242.9 L1013.6 241.5 L1018 240 L1022.2 238.3 L1026.2 236.5 L1030.1 234.6 L1033.7 232.5 L1037.1 230.3 L1040.3 228 L1043.2 225.5 L1045.9 223Z" fill="url(#gfsTR)" stroke="#1b1a16" stroke-width="1.5" stroke-linejoin="round" />
<path d="M880.6 192.1 L877.8 187.4 L875.7 182.6 L874.3 177.7 L873.7 172.8 L873.7 168 L874.5 163.2 L876 158.5 L878.2 153.9 L881.1 149.5 L884.6 145.3 L888.8 141.4 L893.5 137.7 L898.8 134.3 L904.6 131.2 L910.8 128.4 L917.5 126 L924.5 124 L931.8 122.3 L939.4 121 L947.2 120.2 L955.1 119.7 L963.1 119.7 L971.1 120 L979.1 120.8 L987 121.9 L994.8 123.5 L1002.4 125.5 L1009.7 127.8 L1016.7 130.4 L1023.3 133.5 L1029.5 136.8 L1035.2 140.4 L1040.5 144.3 L1045.1 148.4 L1049.2 152.8 L1052.7 157.3 L1055.5 161.9 L1057.6 166.7 L1059.1 171.5 L1059.8 176.4 L1059.7 181.3 L1059 186.1 L1057.5 190.9 L1055.3 195.5 L1052.4 200 L1048.7 204.3 L1044.5 208.3 L1039.5 212.1 L1034 215.6 L1027.9 218.8 L1021.4 221.6 L1014.3 224.1 L1006.9 226.1 L999.1 227.7 L991.1 228.9 L982.8 229.6 L974.5 229.9 L966 229.8 L957.6 229.1 L949.2 228.1 L941 226.6 L933 224.6 L925.3 222.3 L918 219.6 L911 216.5 L904.5 213.1 L898.5 209.4 L893.1 205.4 L888.3 201.1 L884.1 196.7 L880.6 192.1Z" fill="url(#gftTR)" stroke="#1b1a16" stroke-width="1.5" stroke-linejoin="round" />
<path d="M1090.8 183.3 L1087.9 184 L1085 184.6 L1082 185.3 L1079 185.9 L1076 186.4 L1073 186.9 L1069.9 187.4 L1066.8 187.9 L1063.7 188.3 L1060.6 188.7 L1057.4 189 L1054.3 189.3 L1051.1 189.6 L1047.9 189.9 L1044.7 190.1 L1041.5 190.2 L1038.2 190.3 L1035 190.4 L1031.7 190.5 L1028.5 190.5 L1025.2 190.5 L1021.9 190.4 L1018.7 190.3 L1015.4 190.2 L1012.1 190 L1008.9 189.8 L1005.6 189.6 L1002.3 189.3 L999.1 189 L995.8 188.7 L992.6 188.3 L989.4 187.9 L986.1 187.4 L982.9 186.9 L979.7 186.4 L976.5 185.8 L973.4 185.2 L970.2 184.6 L967.1 183.9 L964 183.2 L960.9 182.5 L957.8 181.8 L954.8 181 L951.7 180.1 L948.7 179.3 L945.8 178.4 L942.8 177.4 L939.9 176.5 L937 175.5 L934.2 174.5 L931.4 173.4 L928.6 172.4 L925.8 171.3 L923.1 170.1 L920.4 169 L917.8 167.8 L915.2 166.6 L912.6 165.3 L910.1 164.1 L907.6 162.8 L905.1 161.5 L902.7 160.1 L900.4 158.8 L898.1 157.4 L895.8 156 L893.6 154.5 L891.4 153.1 L889.3 151.6 L887.2 150.1 L885.2 148.6 L883.2 147.1 L881.3 145.5 L879.4 144 L877.6 142.4 L875.8 140.8 L874.1 139.2 L872.4 137.5 L870.8 135.9 L869.2 134.2 L867.9 164 L869.4 165.7 L871 167.3 L872.7 169 L874.4 170.6 L876.1 172.2 L876.8 157.5 L878.6 159 L880.5 160.6 L882.4 162.2 L884.4 163.7 L886.4 165.2 L888.5 166.7 L890.6 168.2 L892.8 169.6 L895 171.1 L897.2 172.5 L899.5 173.9 L901.9 175.2 L904.3 176.6 L906.7 177.9 L909.2 179.2 L911.7 180.5 L914.2 181.7 L916.8 182.9 L919.5 184.1 L922.1 185.3 L924.8 186.4 L927.6 187.5 L930.4 188.6 L933.2 189.6 L936 190.7 L938.9 191.7 L941.8 192.6 L944.7 193.5 L947.7 194.4 L950.7 195.3 L953.7 196.1 L956.7 196.9 L959.8 197.7 L962.8 198.4 L965.9 199.1 L969 199.8 L972.2 200.4 L975.3 201 L978.5 201.6 L981.7 202.1 L984.9 202.6 L988.1 203.1 L991.3 203.5 L994.5 203.9 L997.8 204.2 L1001 204.5 L1004.3 204.8 L1007.5 205 L1010.8 205.2 L1014 205.4 L1017.3 205.5 L1020.5 205.6 L1023.8 205.7 L1027 205.7 L1030.3 205.7 L1033.5 205.6 L1036.7 205.5 L1039.9 205.4 L1043.1 205.2 L1046.3 205 L1049.5 204.8 L1048 219.6 L1051.2 219.4 L1054.3 219 L1057.4 218.7 L1060.5 218.3 L1063.6 217.9 L1066.7 217.4 L1069.7 216.9 L1072.7 216.4 L1075.7 215.9 L1078.7 215.3 L1081.6 214.6 L1084.5 214 L1087.4 213.3Z" fill="url(#gtsTR)" stroke="#1b1a16" stroke-width="1.5" stroke-linejoin="round" />
<path d="M1026.9 100.9 L1090.8 183.3 L1087.2 184.1 L1083.5 185 L1079.7 185.7 L1076 186.4 L1072.1 187.1 L1068.3 187.7 L1064.4 188.2 L1060.5 188.7 L1056.5 189.1 L1052.5 189.5 L1048.5 189.8 L1044.5 190.1 L1040.5 190.3 L1036.4 190.4 L1032.3 190.5 L1028.3 190.5 L1024.2 190.5 L1020.1 190.4 L1016 190.2 L1011.9 190 L1007.8 189.8 L1003.7 189.4 L999.6 189.1 L995.5 188.6 L991.5 188.1 L987.4 187.6 L983.4 187 L979.4 186.3 L975.4 185.6 L971.4 184.9 L967.5 184 L963.6 183.2 L959.7 182.2 L955.9 181.3 L952.1 180.2 L948.3 179.1 L944.6 178 L940.9 176.8 L937.3 175.6 L933.7 174.3 L930.2 173 L926.7 171.6 L923.3 170.2 L919.9 168.8 L916.6 167.3 L913.4 165.7 L910.2 164.1 L907.1 162.5 L904.1 160.9 L901.1 159.2 L898.2 157.4 L895.3 155.7 L892.6 153.9 L889.9 152 L887.3 150.2 L884.7 148.3 L882.3 146.3 L879.9 144.4 L877.6 142.4 L875.4 140.4 L873.3 138.4 L871.2 136.3 L869.2 134.2Z" fill="#e0dcce" stroke="#1b1a16" stroke-width="1.5" stroke-linejoin="round" />
<path d="M1026.9 100.9 L1090.8 183.3 L1087.2 184.1 L1083.5 185 L1079.7 185.7 L1076 186.4 L1072.1 187.1 L1068.3 187.7 L1064.4 188.2 L1060.5 188.7 L1056.5 189.1 L1052.5 189.5 L1048.5 189.8 L1044.5 190.1 L1040.5 190.3 L1036.4 190.4 L1032.3 190.5 L1028.3 190.5 L1024.2 190.5 L1020.1 190.4 L1016 190.2 L1011.9 190 L1007.8 189.8 L1003.7 189.4 L999.6 189.1 L995.5 188.6 L991.5 188.1 L987.4 187.6 L983.4 187 L979.4 186.3 L975.4 185.6 L971.4 184.9 L967.5 184 L963.6 183.2 L959.7 182.2 L955.9 181.3 L952.1 180.2 L948.3 179.1 L944.6 178 L940.9 176.8 L937.3 175.6 L933.7 174.3 L930.2 173 L926.7 171.6 L923.3 170.2 L919.9 168.8 L916.6 167.3 L913.4 165.7 L910.2 164.1 L907.1 162.5 L904.1 160.9 L901.1 159.2 L898.2 157.4 L895.3 155.7 L892.6 153.9 L889.9 152 L887.3 150.2 L884.7 148.3 L882.3 146.3 L879.9 144.4 L877.6 142.4 L875.4 140.4 L873.3 138.4 L871.2 136.3 L869.2 134.2Z" fill="url(#ao6)"/>
<path d="M1026.9 100.9 L1090.8 183.3 L1087.2 184.1 L1083.5 185 L1079.7 185.7 L1076 186.4 L1072.1 187.1 L1068.3 187.7 L1064.4 188.2 L1060.5 188.7 L1056.5 189.1 L1052.5 189.5 L1048.5 189.8 L1044.5 190.1 L1040.5 190.3 L1036.4 190.4 L1032.3 190.5 L1028.3 190.5 L1024.2 190.5 L1020.1 190.4 L1016 190.2 L1011.9 190 L1007.8 189.8 L1003.7 189.4 L999.6 189.1 L995.5 188.6 L991.5 188.1 L987.4 187.6 L983.4 187 L979.4 186.3 L975.4 185.6 L971.4 184.9 L967.5 184 L963.6 183.2 L959.7 182.2 L955.9 181.3 L952.1 180.2 L948.3 179.1 L944.6 178 L940.9 176.8 L937.3 175.6 L933.7 174.3 L930.2 173 L926.7 171.6 L923.3 170.2 L919.9 168.8 L916.6 167.3 L913.4 165.7 L910.2 164.1 L907.1 162.5 L904.1 160.9 L901.1 159.2 L898.2 157.4 L895.3 155.7 L892.6 153.9 L889.9 152 L887.3 150.2 L884.7 148.3 L882.3 146.3 L879.9 144.4 L877.6 142.4 L875.4 140.4 L873.3 138.4 L871.2 136.3 L869.2 134.2Z" fill="url(#ao7)"/>
<path d="M1026.9 100.9 L1090.8 183.3 L1087.2 184.1 L1083.5 185 L1079.7 185.7 L1076 186.4 L1072.1 187.1 L1068.3 187.7 L1064.4 188.2 L1060.5 188.7 L1056.5 189.1 L1052.5 189.5 L1048.5 189.8 L1044.5 190.1 L1040.5 190.3 L1036.4 190.4 L1032.3 190.5 L1028.3 190.5 L1024.2 190.5 L1020.1 190.4 L1016 190.2 L1011.9 190 L1007.8 189.8 L1003.7 189.4 L999.6 189.1 L995.5 188.6 L991.5 188.1 L987.4 187.6 L983.4 187 L979.4 186.3 L975.4 185.6 L971.4 184.9 L967.5 184 L963.6 183.2 L959.7 182.2 L955.9 181.3 L952.1 180.2 L948.3 179.1 L944.6 178 L940.9 176.8 L937.3 175.6 L933.7 174.3 L930.2 173 L926.7 171.6 L923.3 170.2 L919.9 168.8 L916.6 167.3 L913.4 165.7 L910.2 164.1 L907.1 162.5 L904.1 160.9 L901.1 159.2 L898.2 157.4 L895.3 155.7 L892.6 153.9 L889.9 152 L887.3 150.2 L884.7 148.3 L882.3 146.3 L879.9 144.4 L877.6 142.4 L875.4 140.4 L873.3 138.4 L871.2 136.3 L869.2 134.2 L1026.9 100.9" fill="none" stroke="#1b1a16" stroke-width="1.5" stroke-linecap="round" stroke-linejoin="round" />
<path d="M959.2 160.1 L958.5 158.7 L958.5 157.2 L959.1 155.8 L960.5 154.5 L962.3 153.6 L964.6 153 L967 152.8 L969.6 153 L972 153.6 L974.1 154.5 L975.7 155.7 L976.7 157.1 L977.1 158.6 L976.8 160.1 L975.8 161.4 L974.2 162.5 L972.1 163.3 L969.7 163.7 L967.1 163.7 L964.6 163.3 L962.4 162.5 L960.5 161.5 L959.2 160.1Z" fill="#8e8c85" stroke="#1b1a16" stroke-width="1.2" stroke-linejoin="round" />
<g clip-path="url(#thTR)">
<path d="M958.8 165 L958.1 163.6 L958.1 162.1 L958.8 160.7 L960.1 159.4 L961.9 158.5 L964.2 157.9 L966.7 157.7 L969.2 157.9 L971.6 158.5 L973.7 159.4 L975.3 160.6 L976.3 162 L976.7 163.5 L976.4 165 L975.4 166.3 L973.8 167.4 L971.7 168.2 L969.3 168.6 L966.8 168.6 L964.3 168.2 L962 167.5 L960.1 166.4 L958.8 165Z" fill="#b0aea6" stroke="#1b1a16" stroke-width="1.0" stroke-linejoin="round" />
</g>
<path d="M959.2 160.1 L958.5 158.7 L958.5 157.2 L959.1 155.8 L960.5 154.5 L962.3 153.6 L964.6 153 L967 152.8 L969.6 153 L972 153.6 L974.1 154.5 L975.7 155.7 L976.7 157.1 L977.1 158.6 L976.8 160.1 L975.8 161.4 L974.2 162.5 L972.1 163.3 L969.7 163.7 L967.1 163.7 L964.6 163.3 L962.4 162.5 L960.5 161.5 L959.2 160.1 L959.2 160.1" fill="none" stroke="#1b1a16" stroke-width="1.2" stroke-linecap="round" stroke-linejoin="round" />
<path d="M1155.7 561.9 L1153.2 560.9 L1150.6 559.8 L1148.1 558.7 L1145.7 557.5 L1143.2 556.3 L1140.8 555 L1138.5 553.8 L1136.2 552.4 L1133.9 551.1 L1131.7 549.7 L1129.6 548.3 L1127.5 546.8 L1125.4 545.3 L1123.4 543.8 L1121.5 542.3 L1119.6 540.7 L1117.7 539.1 L1116 537.5 L1114.2 535.8 L1112.6 534.1 L1111 532.4 L1109.5 530.7 L1108 529 L1106.6 527.2 L1105.2 525.5 L1104 523.7 L1102.7 521.9 L1101.6 520 L1100.5 518.2 L1099.5 516.4 L1098.6 514.5 L1097.7 512.7 L1096.9 510.8 L1096.2 508.9 L1095.5 507.1 L1094.9 505.2 L1094.4 503.3 L1094 501.4 L1093.6 499.6 L1093.3 497.7 L1093.1 495.8 L1092.9 493.9 L1092.8 492.1 L1092.8 490.2 L1092.8 488.4 L1093 486.5 L1093.2 484.7 L1090.9 502.9 L1090.7 504.8 L1090.5 506.6 L1090.5 508.4 L1090.5 510.3 L1090.6 512.2 L1090.7 514 L1091 515.9 L1091.3 517.8 L1091.6 519.7 L1092.1 521.6 L1092.6 523.4 L1093.2 525.3 L1093.8 527.2 L1094.6 529.1 L1095.4 530.9 L1096.2 532.8 L1097.2 534.6 L1098.2 536.5 L1099.2 538.3 L1100.4 540.1 L1101.6 541.9 L1102.8 543.7 L1104.2 545.5 L1105.6 547.3 L1107 549 L1108.5 550.7 L1110.1 552.4 L1111.8 554.1 L1113.5 555.7 L1115.2 557.4 L1117.1 559 L1118.9 560.5 L1120.9 562.1 L1122.9 563.6 L1124.9 565.1 L1127 566.6 L1129.1 568 L1131.3 569.4 L1133.6 570.7 L1135.9 572 L1138.2 573.3 L1140.6 574.6 L1143 575.8 L1145.4 577 L1147.9 578.1 L1150.4 579.2 L1153 580.2Z" fill="url(#gfsR)" stroke="#1b1a16" stroke-width="1.5" stroke-linejoin="round" />
<path d="M1103.5 523 L1099.7 516.7 L1096.7 510.4 L1094.6 503.9 L1093.3 497.5 L1092.8 491.1 L1093.1 484.8 L1094.3 478.6 L1096.3 472.6 L1099.1 466.8 L1102.7 461.3 L1107 456.2 L1112 451.3 L1117.6 446.8 L1123.9 442.8 L1130.7 439.1 L1138 436 L1145.8 433.3 L1154 431.1 L1162.5 429.4 L1171.3 428.3 L1180.3 427.7 L1189.4 427.6 L1198.6 428.1 L1207.9 429.1 L1217.1 430.6 L1226.2 432.6 L1235.1 435.2 L1243.7 438.2 L1252 441.7 L1260 445.7 L1267.5 450 L1274.6 454.8 L1281.1 459.9 L1287 465.3 L1292.2 471 L1296.8 476.9 L1300.6 483.1 L1303.6 489.4 L1305.9 495.7 L1307.3 502.2 L1308 508.6 L1307.7 515 L1306.6 521.3 L1304.7 527.4 L1301.9 533.3 L1298.3 539 L1293.9 544.4 L1288.7 549.4 L1282.8 554.1 L1276.2 558.3 L1269 562 L1261.2 565.3 L1252.9 568 L1244.2 570.1 L1235.1 571.7 L1225.7 572.7 L1216 573.1 L1206.3 572.9 L1196.5 572 L1186.7 570.6 L1177.1 568.6 L1167.7 566.1 L1158.5 563 L1149.7 559.4 L1141.3 555.3 L1133.4 550.8 L1126.1 545.8 L1119.4 540.5 L1113.4 534.9 L1108.1 529.1 L1103.5 523Z" fill="url(#gftR)" stroke="#1b1a16" stroke-width="1.5" stroke-linejoin="round" />
<path d="M1185.9 590.5 L1184.9 589.4 L1184 588.3 L1183 587.2 L1182.1 586.1 L1181.1 585 L1180.2 583.8 L1179.3 582.7 L1178.4 581.6 L1177.6 580.4 L1176.7 579.3 L1175.9 578.1 L1175 577 L1174.2 575.8 L1173.4 574.7 L1172.6 573.5 L1171.8 572.4 L1171.1 571.2 L1170.3 570 L1169.6 568.9 L1168.9 567.7 L1168.2 566.5 L1167.5 565.4 L1166.8 564.2 L1166.2 563 L1165.5 561.9 L1164.9 560.7 L1164.3 559.5 L1163.7 558.3 L1163.1 557.1 L1162.5 556 L1162 554.8 L1161.4 553.6 L1160.9 552.4 L1160.4 551.2 L1159.9 550 L1159.4 548.8 L1158.9 547.7 L1158.5 546.5 L1158 545.3 L1157.6 544.1 L1157.2 542.9 L1156.8 541.7 L1156.4 540.5 L1156.1 539.3 L1155.7 538.2 L1155.4 537 L1155.1 535.8 L1154.8 534.6 L1154.5 533.4 L1154.2 532.2 L1153.9 531 L1153.7 529.9 L1153.5 528.7 L1153.3 527.5 L1153.1 526.3 L1152.9 525.1 L1152.7 523.9 L1152.5 522.8 L1152.4 521.6 L1152.3 520.4 L1152.2 519.2 L1152.1 518.1 L1152 516.9 L1151.9 515.7 L1151.9 514.6 L1151.9 513.4 L1151.8 512.3 L1151.8 511.1 L1151.8 509.9 L1151.9 508.8 L1151.9 507.6 L1151.9 506.5 L1152 505.3 L1152.1 504.2 L1152.2 503.1 L1152.3 501.9 L1152.4 500.8 L1152.6 499.6 L1152.7 498.5 L1150.4 514.2 L1150.3 515.3 L1150.1 516.5 L1150 517.6 L1149.9 518.7 L1149.8 519.9 L1149.7 521 L1149.6 522.2 L1149.6 523.3 L1149.6 524.5 L1149.5 525.6 L1149.5 526.8 L1149.5 528 L1149.5 529.1 L1149.6 530.3 L1149.6 531.5 L1149.7 532.6 L1149.8 533.8 L1149.9 535 L1150 536.1 L1150.1 537.3 L1150.2 538.5 L1150.4 539.7 L1150.5 540.8 L1150.7 542 L1150.9 543.2 L1151.1 544.4 L1151.4 545.6 L1151.6 546.8 L1151.9 547.9 L1152.1 549.1 L1152.4 550.3 L1152.7 551.5 L1153 552.7 L1153.4 553.9 L1153.7 555.1 L1154.1 556.3 L1154.4 557.5 L1154.8 558.6 L1155.2 559.8 L1155.7 561 L1156.1 562.2 L1153.8 577.5 L1154.2 578.7 L1154.7 579.9 L1155.2 581.1 L1155.7 582.3 L1156.2 583.5 L1156.7 584.7 L1157.2 585.9 L1157.8 587 L1158.3 588.2 L1158.9 589.4 L1159.5 590.6 L1160.1 591.8 L1160.7 593 L1161.4 594.1 L1162 595.3 L1162.7 596.5 L1163.3 597.7 L1164 598.8 L1164.7 600 L1165.5 601.2 L1166.2 602.3 L1167 603.5 L1167.7 604.6 L1168.5 605.8 L1169.3 607 L1170.1 608.1 L1170.9 609.3 L1171.8 610.4 L1172.6 611.5 L1173.5 612.7 L1174.3 613.8 L1175.2 615 L1176.1 616.1 L1177 617.2 L1178 618.3 L1178.9 619.5 L1179.9 620.6 L1180.8 621.7Z" fill="url(#gtsR)" stroke="#1b1a16" stroke-width="1.5" stroke-linejoin="round" />
<path d="M1369 541.9 L1185.9 590.5 L1182.8 587 L1179.9 583.4 L1177.1 579.8 L1174.5 576.2 L1172 572.6 L1169.6 568.9 L1167.4 565.2 L1165.3 561.5 L1163.4 557.7 L1161.6 554 L1159.9 550.2 L1158.5 546.5 L1157.1 542.7 L1155.9 538.9 L1154.9 535.2 L1154 531.4 L1153.3 527.7 L1152.7 523.9 L1152.3 520.2 L1152 516.5 L1151.8 512.8 L1151.8 509.1 L1152 505.5 L1152.3 501.9 L1152.8 498.3 L1153.4 494.7 L1154.1 491.2 L1155 487.7 L1156 484.3 L1157.2 480.9 L1158.5 477.5 L1159.9 474.2 L1161.5 470.9 L1163.2 467.7 L1165.1 464.6 L1167 461.4 L1169.1 458.4 L1171.4 455.4 L1173.7 452.4 L1176.2 449.6 L1178.8 446.8 L1181.5 444 L1184.4 441.3 L1187.3 438.7 L1190.4 436.2 L1193.6 433.7 L1196.8 431.3 L1200.2 428.9 L1203.7 426.7 L1207.3 424.5 L1211 422.4 L1214.8 420.4 L1218.6 418.4 L1222.6 416.6 L1226.6 414.8 L1230.8 413.1 L1235 411.5 L1239.2 409.9 L1243.6 408.5 L1248 407.1 L1252.5 405.8 L1257.1 404.7 L1261.7 403.6Z" fill="#dfdbcd" stroke="#1b1a16" stroke-width="1.5" stroke-linejoin="round" />
<path d="M1369 541.9 L1185.9 590.5 L1182.8 587 L1179.9 583.4 L1177.1 579.8 L1174.5 576.2 L1172 572.6 L1169.6 568.9 L1167.4 565.2 L1165.3 561.5 L1163.4 557.7 L1161.6 554 L1159.9 550.2 L1158.5 546.5 L1157.1 542.7 L1155.9 538.9 L1154.9 535.2 L1154 531.4 L1153.3 527.7 L1152.7 523.9 L1152.3 520.2 L1152 516.5 L1151.8 512.8 L1151.8 509.1 L1152 505.5 L1152.3 501.9 L1152.8 498.3 L1153.4 494.7 L1154.1 491.2 L1155 487.7 L1156 484.3 L1157.2 480.9 L1158.5 477.5 L1159.9 474.2 L1161.5 470.9 L1163.2 467.7 L1165.1 464.6 L1167 461.4 L1169.1 458.4 L1171.4 455.4 L1173.7 452.4 L1176.2 449.6 L1178.8 446.8 L1181.5 444 L1184.4 441.3 L1187.3 438.7 L1190.4 436.2 L1193.6 433.7 L1196.8 431.3 L1200.2 428.9 L1203.7 426.7 L1207.3 424.5 L1211 422.4 L1214.8 420.4 L1218.6 418.4 L1222.6 416.6 L1226.6 414.8 L1230.8 413.1 L1235 411.5 L1239.2 409.9 L1243.6 408.5 L1248 407.1 L1252.5 405.8 L1257.1 404.7 L1261.7 403.6Z" fill="url(#ao8)"/>
<path d="M1369 541.9 L1185.9 590.5 L1182.8 587 L1179.9 583.4 L1177.1 579.8 L1174.5 576.2 L1172 572.6 L1169.6 568.9 L1167.4 565.2 L1165.3 561.5 L1163.4 557.7 L1161.6 554 L1159.9 550.2 L1158.5 546.5 L1157.1 542.7 L1155.9 538.9 L1154.9 535.2 L1154 531.4 L1153.3 527.7 L1152.7 523.9 L1152.3 520.2 L1152 516.5 L1151.8 512.8 L1151.8 509.1 L1152 505.5 L1152.3 501.9 L1152.8 498.3 L1153.4 494.7 L1154.1 491.2 L1155 487.7 L1156 484.3 L1157.2 480.9 L1158.5 477.5 L1159.9 474.2 L1161.5 470.9 L1163.2 467.7 L1165.1 464.6 L1167 461.4 L1169.1 458.4 L1171.4 455.4 L1173.7 452.4 L1176.2 449.6 L1178.8 446.8 L1181.5 444 L1184.4 441.3 L1187.3 438.7 L1190.4 436.2 L1193.6 433.7 L1196.8 431.3 L1200.2 428.9 L1203.7 426.7 L1207.3 424.5 L1211 422.4 L1214.8 420.4 L1218.6 418.4 L1222.6 416.6 L1226.6 414.8 L1230.8 413.1 L1235 411.5 L1239.2 409.9 L1243.6 408.5 L1248 407.1 L1252.5 405.8 L1257.1 404.7 L1261.7 403.6Z" fill="url(#ao9)"/>
<path d="M1369 541.9 L1185.9 590.5 L1182.8 587 L1179.9 583.4 L1177.1 579.8 L1174.5 576.2 L1172 572.6 L1169.6 568.9 L1167.4 565.2 L1165.3 561.5 L1163.4 557.7 L1161.6 554 L1159.9 550.2 L1158.5 546.5 L1157.1 542.7 L1155.9 538.9 L1154.9 535.2 L1154 531.4 L1153.3 527.7 L1152.7 523.9 L1152.3 520.2 L1152 516.5 L1151.8 512.8 L1151.8 509.1 L1152 505.5 L1152.3 501.9 L1152.8 498.3 L1153.4 494.7 L1154.1 491.2 L1155 487.7 L1156 484.3 L1157.2 480.9 L1158.5 477.5 L1159.9 474.2 L1161.5 470.9 L1163.2 467.7 L1165.1 464.6 L1167 461.4 L1169.1 458.4 L1171.4 455.4 L1173.7 452.4 L1176.2 449.6 L1178.8 446.8 L1181.5 444 L1184.4 441.3 L1187.3 438.7 L1190.4 436.2 L1193.6 433.7 L1196.8 431.3 L1200.2 428.9 L1203.7 426.7 L1207.3 424.5 L1211 422.4 L1214.8 420.4 L1218.6 418.4 L1222.6 416.6 L1226.6 414.8 L1230.8 413.1 L1235 411.5 L1239.2 409.9 L1243.6 408.5 L1248 407.1 L1252.5 405.8 L1257.1 404.7 L1261.7 403.6 L1369 541.9" fill="none" stroke="#1b1a16" stroke-width="1.5" stroke-linecap="round" stroke-linejoin="round" />
<path d="M1192.9 485 L1191.9 483.1 L1191.7 481.1 L1192.3 479.2 L1193.7 477.6 L1195.7 476.4 L1198.2 475.6 L1201.1 475.3 L1204 475.6 L1206.8 476.4 L1209.3 477.6 L1211.3 479.2 L1212.7 481.1 L1213.3 483 L1213.1 485 L1212.1 486.7 L1210.4 488.2 L1208.2 489.2 L1205.4 489.8 L1202.5 489.8 L1199.6 489.2 L1196.9 488.2 L1194.6 486.8 L1192.9 485Z" fill="#8e8c85" stroke="#1b1a16" stroke-width="1.2" stroke-linejoin="round" />
<g clip-path="url(#thR)">
<path d="M1192.1 490.1 L1191.1 488.2 L1190.9 486.2 L1191.5 484.3 L1192.9 482.7 L1194.9 481.5 L1197.4 480.7 L1200.2 480.4 L1203.2 480.7 L1206 481.4 L1208.5 482.7 L1210.5 484.3 L1211.9 486.1 L1212.5 488.1 L1212.3 490.1 L1211.3 491.8 L1209.6 493.3 L1207.3 494.3 L1204.6 494.9 L1201.7 494.9 L1198.8 494.3 L1196.1 493.3 L1193.8 491.9 L1192.1 490.1Z" fill="#b0aea6" stroke="#1b1a16" stroke-width="1.0" stroke-linejoin="round" />
</g>
<path d="M1192.9 485 L1191.9 483.1 L1191.7 481.1 L1192.3 479.2 L1193.7 477.6 L1195.7 476.4 L1198.2 475.6 L1201.1 475.3 L1204 475.6 L1206.8 476.4 L1209.3 477.6 L1211.3 479.2 L1212.7 481.1 L1213.3 483 L1213.1 485 L1212.1 486.7 L1210.4 488.2 L1208.2 489.2 L1205.4 489.8 L1202.5 489.8 L1199.6 489.2 L1196.9 488.2 L1194.6 486.8 L1192.9 485 L1192.9 485" fill="none" stroke="#1b1a16" stroke-width="1.2" stroke-linecap="round" stroke-linejoin="round" />
<path d="M636 669.6 L636 670.1 L636 670.7 L636 671.2 L636 671.8 L636 672.4 L636 672.9 L636 673.5 L636 674 L635.9 674.6 L635.9 675.1 L635.9 675.7 L635.8 676.2 L635.8 676.8 L635.7 677.4 L635.6 677.9 L635.6 678.5 L635.5 679 L635.4 679.6 L635.4 680.1 L635.3 680.7 L635.2 681.3 L635.1 681.8 L635 682.4 L634.9 682.9 L634.8 683.5 L634.7 684 L634.5 684.6 L634.4 685.2 L634.3 685.7 L634.1 686.3 L634 686.8 L633.9 687.4 L633.7 687.9 L633.6 688.5 L633.4 689 L633.2 689.6 L633.1 690.1 L632.9 690.7 L632.7 691.2 L632.5 691.8 L632.3 692.3 L632.1 692.9 L631.9 693.4 L631.7 694 L631.5 694.5 L631.3 695.1 L631.1 695.6 L631.6 714 L631.8 713.4 L632 712.9 L632.2 712.4 L632.4 711.8 L632.6 711.3 L632.8 710.7 L633 710.2 L633.2 709.6 L633.4 709.1 L633.6 708.5 L633.7 708 L633.9 707.4 L634.1 706.9 L634.2 706.3 L634.4 705.7 L634.5 705.2 L634.7 704.6 L634.8 704.1 L634.9 703.5 L635.1 703 L635.2 702.4 L635.3 701.9 L635.4 701.3 L635.5 700.7 L635.6 700.2 L635.7 699.6 L635.8 699.1 L635.9 698.5 L635.9 698 L636 697.4 L636.1 696.8 L636.2 696.3 L636.2 695.7 L636.3 695.2 L636.3 694.6 L636.4 694.1 L636.4 693.5 L636.4 692.9 L636.5 692.4 L636.5 691.8 L636.5 691.3 L636.5 690.7 L636.5 690.2 L636.5 689.6 L636.5 689.1 L636.5 688.5 L636.5 687.9Z" fill="url(#gfsBL)" stroke="#1b1a16" stroke-width="1.5" stroke-linejoin="round" />
<path d="M411.2 701.2 L409 694 L407.7 686.7 L407.2 679.4 L407.7 672 L409.1 664.7 L411.3 657.5 L414.4 650.4 L418.3 643.5 L422.9 636.9 L428.3 630.7 L434.5 624.7 L441.2 619.2 L448.5 614.1 L456.4 609.4 L464.8 605.3 L473.5 601.7 L482.6 598.6 L492 596.1 L501.6 594.2 L511.3 592.9 L521.1 592.2 L530.9 592.1 L540.6 592.7 L550.2 593.8 L559.6 595.5 L568.8 597.9 L577.5 600.8 L585.9 604.2 L593.8 608.2 L601.2 612.7 L608 617.7 L614.2 623.1 L619.7 628.9 L624.4 635.1 L628.4 641.6 L631.6 648.4 L633.9 655.4 L635.4 662.6 L636 669.9 L635.7 677.3 L634.5 684.7 L632.4 692 L629.5 699.2 L625.6 706.2 L620.9 713 L615.5 719.5 L609.2 725.7 L602.2 731.5 L594.5 736.8 L586.2 741.7 L577.4 746 L568.1 749.7 L558.4 752.8 L548.4 755.3 L538.2 757.1 L527.8 758.2 L517.4 758.7 L507 758.4 L496.7 757.5 L486.6 755.9 L476.9 753.6 L467.5 750.6 L458.5 747.1 L450.1 742.9 L442.3 738.3 L435.2 733.1 L428.8 727.4 L423.2 721.3 L418.3 714.9 L414.3 708.2 L411.2 701.2Z" fill="url(#gftBL)" stroke="#1b1a16" stroke-width="1.5" stroke-linejoin="round" />
<path d="M469.1 781.1 L405.4 616.8 L410.6 615.8 L415.8 615 L421.1 614.2 L426.3 613.6 L431.6 613 L436.9 612.5 L442.2 612.2 L447.5 611.9 L452.7 611.7 L458 611.6 L463.3 611.7 L468.5 611.8 L473.8 612 L479 612.3 L484.2 612.7 L489.4 613.2 L494.5 613.7 L499.7 614.4 L504.8 615.2 L509.8 616.1 L514.9 617 L519.8 618.1 L524.8 619.2 L529.7 620.5 L534.5 621.8 L539.3 623.3 L544.1 624.8 L548.8 626.4 L553.4 628.1 L558 629.9 L562.5 631.7 L567 633.7 L571.3 635.7 L575.6 637.9 L579.9 640.1 L584 642.4 L588.1 644.8 L592.1 647.2 L596 649.8 L599.8 652.4 L603.5 655.1 L607.2 657.9 L610.7 660.7 L614.2 663.6 L617.5 666.6 L620.8 669.7 L623.9 672.8 L627 676 L629.9 679.3 L632.7 682.6 L635.4 686 L638 689.4 L640.5 692.9 L642.8 696.5 L645.1 700.1 L647.2 703.8 L649.2 707.5 L651.1 711.3 L652.8 715.1 L654.4 718.9 L655.9 722.8 L657.3 726.8 L658.5 730.8Z" fill="#dfdbcd" stroke="#1b1a16" stroke-width="1.5" stroke-linejoin="round" />
<path d="M469.1 781.1 L405.4 616.8 L410.6 615.8 L415.8 615 L421.1 614.2 L426.3 613.6 L431.6 613 L436.9 612.5 L442.2 612.2 L447.5 611.9 L452.7 611.7 L458 611.6 L463.3 611.7 L468.5 611.8 L473.8 612 L479 612.3 L484.2 612.7 L489.4 613.2 L494.5 613.7 L499.7 614.4 L504.8 615.2 L509.8 616.1 L514.9 617 L519.8 618.1 L524.8 619.2 L529.7 620.5 L534.5 621.8 L539.3 623.3 L544.1 624.8 L548.8 626.4 L553.4 628.1 L558 629.9 L562.5 631.7 L567 633.7 L571.3 635.7 L575.6 637.9 L579.9 640.1 L584 642.4 L588.1 644.8 L592.1 647.2 L596 649.8 L599.8 652.4 L603.5 655.1 L607.2 657.9 L610.7 660.7 L614.2 663.6 L617.5 666.6 L620.8 669.7 L623.9 672.8 L627 676 L629.9 679.3 L632.7 682.6 L635.4 686 L638 689.4 L640.5 692.9 L642.8 696.5 L645.1 700.1 L647.2 703.8 L649.2 707.5 L651.1 711.3 L652.8 715.1 L654.4 718.9 L655.9 722.8 L657.3 726.8 L658.5 730.8Z" fill="url(#ao10)"/>
<path d="M469.1 781.1 L405.4 616.8 L410.6 615.8 L415.8 615 L421.1 614.2 L426.3 613.6 L431.6 613 L436.9 612.5 L442.2 612.2 L447.5 611.9 L452.7 611.7 L458 611.6 L463.3 611.7 L468.5 611.8 L473.8 612 L479 612.3 L484.2 612.7 L489.4 613.2 L494.5 613.7 L499.7 614.4 L504.8 615.2 L509.8 616.1 L514.9 617 L519.8 618.1 L524.8 619.2 L529.7 620.5 L534.5 621.8 L539.3 623.3 L544.1 624.8 L548.8 626.4 L553.4 628.1 L558 629.9 L562.5 631.7 L567 633.7 L571.3 635.7 L575.6 637.9 L579.9 640.1 L584 642.4 L588.1 644.8 L592.1 647.2 L596 649.8 L599.8 652.4 L603.5 655.1 L607.2 657.9 L610.7 660.7 L614.2 663.6 L617.5 666.6 L620.8 669.7 L623.9 672.8 L627 676 L629.9 679.3 L632.7 682.6 L635.4 686 L638 689.4 L640.5 692.9 L642.8 696.5 L645.1 700.1 L647.2 703.8 L649.2 707.5 L651.1 711.3 L652.8 715.1 L654.4 718.9 L655.9 722.8 L657.3 726.8 L658.5 730.8Z" fill="url(#ao11)"/>
<path d="M469.1 781.1 L405.4 616.8 L410.6 615.8 L415.8 615 L421.1 614.2 L426.3 613.6 L431.6 613 L436.9 612.5 L442.2 612.2 L447.5 611.9 L452.7 611.7 L458 611.6 L463.3 611.7 L468.5 611.8 L473.8 612 L479 612.3 L484.2 612.7 L489.4 613.2 L494.5 613.7 L499.7 614.4 L504.8 615.2 L509.8 616.1 L514.9 617 L519.8 618.1 L524.8 619.2 L529.7 620.5 L534.5 621.8 L539.3 623.3 L544.1 624.8 L548.8 626.4 L553.4 628.1 L558 629.9 L562.5 631.7 L567 633.7 L571.3 635.7 L575.6 637.9 L579.9 640.1 L584 642.4 L588.1 644.8 L592.1 647.2 L596 649.8 L599.8 652.4 L603.5 655.1 L607.2 657.9 L610.7 660.7 L614.2 663.6 L617.5 666.6 L620.8 669.7 L623.9 672.8 L627 676 L629.9 679.3 L632.7 682.6 L635.4 686 L638 689.4 L640.5 692.9 L642.8 696.5 L645.1 700.1 L647.2 703.8 L649.2 707.5 L651.1 711.3 L652.8 715.1 L654.4 718.9 L655.9 722.8 L657.3 726.8 L658.5 730.8 L469.1 781.1" fill="none" stroke="#1b1a16" stroke-width="1.5" stroke-linecap="round" stroke-linejoin="round" />
<path d="M509.7 659.8 L509.3 657.6 L509.6 655.3 L510.8 653.2 L512.7 651.4 L515.3 649.9 L518.2 649 L521.3 648.7 L524.4 649 L527.2 649.9 L529.5 651.3 L531.2 653.2 L532.1 655.3 L532.2 657.5 L531.4 659.8 L529.8 661.8 L527.6 663.5 L524.8 664.6 L521.8 665.3 L518.6 665.3 L515.7 664.7 L513.1 663.5 L511 661.8 L509.7 659.8Z" fill="#8e8c85" stroke="#1b1a16" stroke-width="1.2" stroke-linejoin="round" />
<g clip-path="url(#thBL)">
<path d="M510.1 664.9 L509.6 662.7 L510 660.5 L511.2 658.3 L513.1 656.5 L515.6 655.1 L518.5 654.2 L521.6 653.8 L524.7 654.1 L527.5 655 L529.8 656.5 L531.5 658.3 L532.4 660.4 L532.5 662.7 L531.7 664.9 L530.2 666.9 L527.9 668.6 L525.2 669.8 L522.1 670.4 L519 670.4 L516 669.8 L513.4 668.6 L511.4 667 L510.1 664.9Z" fill="#b0aea6" stroke="#1b1a16" stroke-width="1.0" stroke-linejoin="round" />
</g>
<path d="M509.7 659.8 L509.3 657.6 L509.6 655.3 L510.8 653.2 L512.7 651.4 L515.3 649.9 L518.2 649 L521.3 648.7 L524.4 649 L527.2 649.9 L529.5 651.3 L531.2 653.2 L532.1 655.3 L532.2 657.5 L531.4 659.8 L529.8 661.8 L527.6 663.5 L524.8 664.6 L521.8 665.3 L518.6 665.3 L515.7 664.7 L513.1 663.5 L511 661.8 L509.7 659.8 L509.7 659.8" fill="none" stroke="#1b1a16" stroke-width="1.2" stroke-linecap="round" stroke-linejoin="round" />
<path d="M240.9 252.7 L265.7 247.5 L465.4 760.2 L435.5 768Z" fill="url(#gls)" stroke="#1b1a16" stroke-width="1.5" stroke-linejoin="round" />
<path d="M245.2 228.7 L260 232.9 L265.7 247.5" fill="none" stroke="#1b1a16" stroke-width="1.5" stroke-linecap="round" stroke-linejoin="round" />
<path d="M194.2 185.4 L1027 16.2 L1028.7 16 L1030.5 16 L1032.3 16.2 L1034 16.6 L1035.5 17.2 L1036.7 18 L1037.7 18.9 L1413.3 481.2 L1414.2 482.7 L1414.6 484.1 L1414.6 485.6 L1414 487 L1413 488.1 L1411.5 489.1 L1409.8 489.7 L407.3 751.9 L399.3 742.7Z M232.9 194.3 L1019.7 33.2 L1372.4 475.2 L434.1 718.2Z" fill="#e1ddcf" fill-rule="evenodd" stroke="#1b1a16" stroke-width="1.3" stroke-linejoin="round"/>
<path d="M254.5 324.4 L254.4 323 L255 321.5 L256.3 320.2 L258.2 319.2 L260.4 318.6 L262.8 318.5 L264.9 318.8 L266.8 319.6 L268 320.7 L268.5 322.1 L268.3 323.6 L267.3 325 L265.7 326.2 L263.6 327 L261.2 327.4 L258.9 327.3 L256.9 326.7 L255.4 325.7 L254.5 324.4Z" fill="#050505"/>
<path d="M340.6 554.9 L340.4 553.1 L341 551.4 L342.4 549.8 L344.4 548.6 L346.8 547.8 L349.4 547.7 L351.8 548.1 L353.8 549 L355.2 550.4 L355.9 552.1 L355.7 553.9 L354.6 555.5 L352.9 557 L350.6 558 L348.1 558.4 L345.6 558.3 L343.3 557.6 L341.6 556.4 L340.6 554.9Z" fill="#050505"/>
<path d="M452.3 141.5 L452 140.3 L452.5 139 L453.6 137.9 L455.3 137.1 L457.3 136.6 L459.4 136.4 L461.5 136.7 L463.2 137.4 L464.4 138.4 L465 139.5 L464.9 140.8 L464.1 142 L462.7 143 L460.8 143.7 L458.7 144 L456.6 143.9 L454.7 143.4 L453.2 142.6 L452.3 141.5Z" fill="#050505"/>
<path d="M802.4 69.6 L802 68.4 L802.3 67.3 L803.2 66.2 L804.6 65.4 L806.5 65 L808.5 64.8 L810.6 65.1 L812.3 65.7 L813.7 66.7 L814.4 67.8 L814.5 68.9 L813.9 70 L812.7 71 L811 71.6 L809.1 71.9 L807 71.8 L805.1 71.4 L803.5 70.6 L802.4 69.6Z" fill="#050505"/>
<path d="M1111.4 135.7 L1110.8 134.5 L1110.9 133.3 L1111.7 132.2 L1113 131.3 L1114.9 130.8 L1117 130.7 L1119.1 131 L1121 131.7 L1122.5 132.6 L1123.5 133.8 L1123.8 135 L1123.3 136.2 L1122.2 137.2 L1120.6 137.9 L1118.6 138.2 L1116.4 138.1 L1114.4 137.7 L1112.6 136.8 L1111.4 135.7Z" fill="#050505"/>
<path d="M1268.5 329.8 L1267.7 328.4 L1267.7 326.9 L1268.5 325.6 L1269.9 324.6 L1271.9 324 L1274.1 323.9 L1276.5 324.2 L1278.6 325 L1280.4 326.1 L1281.5 327.5 L1281.9 329 L1281.5 330.4 L1280.4 331.6 L1278.7 332.4 L1276.5 332.8 L1274.2 332.7 L1271.9 332.1 L1269.9 331.1 L1268.5 329.8Z" fill="#050505"/>
<path d="M709.6 659 L709.1 657.1 L709.5 655.2 L710.7 653.5 L712.6 652.2 L715 651.4 L717.7 651.2 L720.2 651.6 L722.5 652.7 L724.1 654.2 L725 656 L725.1 657.9 L724.3 659.7 L722.7 661.3 L720.5 662.3 L717.9 662.8 L715.3 662.7 L712.8 661.9 L710.9 660.7 L709.6 659Z" fill="#050505"/>
<path d="M1127.2 549.8 L1126.4 548.1 L1126.5 546.3 L1127.5 544.8 L1129.1 543.6 L1131.3 542.8 L1133.8 542.7 L1136.3 543.1 L1138.6 544 L1140.4 545.4 L1141.6 547.1 L1141.9 548.8 L1141.4 550.5 L1140.1 551.9 L1138.2 552.9 L1135.8 553.4 L1133.2 553.2 L1130.8 552.6 L1128.7 551.4 L1127.2 549.8Z" fill="#050505"/>
<path d="M203.8 193.1 L203.5 191.3 L203.8 189.5 L204.7 187.7 L206.1 186 L208.1 184.5 L210.5 183.2 L213.2 182.2 L216.2 181.5 L219.3 181.1 L222.3 181.1 L225.2 181.5 L227.8 182.2 L230 183.3 L231.8 184.6 L233 186.2 L233.7 187.9 L233.7 189.7 L233.2 191.5 L232 193.2 L230.3 194.9 L228.1 196.3 L225.5 197.5 L222.6 198.4 L219.6 198.9 L216.5 199.1 L213.5 198.8 L210.7 198.3 L208.3 197.4 L206.2 196.2 L204.7 194.7 L203.8 193.1Z" fill="#c4c0b3" stroke="#1b1a16" stroke-width="1.2" stroke-linejoin="round" />
<g clip-path="url(#cb1)">
<path d="M204.4 196.8 L204 195 L204.3 193.2 L205.2 191.4 L206.7 189.7 L208.7 188.2 L211.1 186.9 L213.8 185.9 L216.8 185.2 L219.8 184.8 L222.8 184.9 L225.7 185.2 L228.3 186 L230.6 187 L232.3 188.3 L233.6 189.9 L234.2 191.6 L234.3 193.4 L233.7 195.2 L232.5 197 L230.8 198.6 L228.6 200 L226 201.2 L223.2 202.1 L220.1 202.6 L217 202.8 L214.1 202.6 L211.3 202 L208.8 201.1 L206.8 199.9 L205.3 198.4 L204.4 196.8Z" fill="#dcd8ca" stroke="#1b1a16" stroke-width="1.1" stroke-linejoin="round" />
</g>
<path d="M212.1 195.2 L211.9 194.1 L212.3 192.9 L213.2 191.8 L214.6 190.8 L216.2 190.1 L218.1 189.6 L220.1 189.4 L222 189.6 L223.7 190.1 L225.1 190.8 L226 191.8 L226.5 192.9 L226.3 194 L225.7 195.2 L224.6 196.2 L223 197.1 L221.2 197.7 L219.3 198 L217.3 198 L215.5 197.7 L213.9 197.1 L212.7 196.3 L212.1 195.2Z" fill="#8f8d86" stroke="#1b1a16" stroke-width="1.1" stroke-linejoin="round" />
<g clip-path="url(#cbh1)">
<path d="M212.7 199.4 L212.6 198.2 L212.9 197.1 L213.8 196 L215.2 195 L216.9 194.2 L218.8 193.8 L220.8 193.6 L222.7 193.8 L224.4 194.2 L225.7 195 L226.7 195.9 L227.1 197 L227 198.2 L226.3 199.4 L225.2 200.4 L223.7 201.3 L221.8 201.9 L219.9 202.2 L217.9 202.2 L216.1 201.9 L214.5 201.3 L213.4 200.4 L212.7 199.4Z" fill="#b9b7af" stroke="#1b1a16" stroke-width="1.0" stroke-linejoin="round" />
</g>
<path d="M203.8 193.1 L203.5 191.3 L203.8 189.5 L204.7 187.7 L206.1 186 L208.1 184.5 L210.5 183.2 L213.2 182.2 L216.2 181.5 L219.3 181.1 L222.3 181.1 L225.2 181.5 L227.8 182.2 L230 183.3 L231.8 184.6 L233 186.2 L233.7 187.9 L233.7 189.7 L233.2 191.5 L232 193.2 L230.3 194.9 L228.1 196.3 L225.5 197.5 L222.6 198.4 L219.6 198.9 L216.5 199.1 L213.5 198.8 L210.7 198.3 L208.3 197.4 L206.2 196.2 L204.7 194.7 L203.8 193.1" fill="none" stroke="#1b1a16" stroke-width="1.2" stroke-linecap="round" stroke-linejoin="round" />
<path d="M1012 27.8 L1011.1 26.3 L1010.8 24.7 L1011 23.2 L1011.8 21.8 L1013.1 20.5 L1014.9 19.3 L1017 18.5 L1019.5 17.9 L1022.2 17.6 L1025 17.6 L1027.8 17.9 L1030.5 18.6 L1032.9 19.5 L1035 20.6 L1036.7 21.9 L1037.9 23.4 L1038.5 24.9 L1038.6 26.5 L1038.1 28 L1037.1 29.4 L1035.5 30.6 L1033.5 31.6 L1031.2 32.3 L1028.5 32.8 L1025.7 32.9 L1022.9 32.8 L1020.2 32.3 L1017.6 31.5 L1015.3 30.5 L1013.4 29.2 L1012 27.8Z" fill="#c4c0b3" stroke="#1b1a16" stroke-width="1.2" stroke-linejoin="round" />
<g clip-path="url(#cb2)">
<path d="M1011.7 31.4 L1010.8 29.9 L1010.4 28.4 L1010.7 26.8 L1011.5 25.4 L1012.8 24.1 L1014.6 23 L1016.7 22.1 L1019.2 21.5 L1021.9 21.2 L1024.7 21.2 L1027.5 21.5 L1030.2 22.2 L1032.6 23.1 L1034.7 24.2 L1036.3 25.5 L1037.5 27 L1038.2 28.5 L1038.3 30.1 L1037.8 31.6 L1036.7 33 L1035.2 34.2 L1033.2 35.2 L1030.8 36 L1028.2 36.4 L1025.4 36.5 L1022.6 36.4 L1019.8 35.9 L1017.3 35.1 L1015 34.1 L1013.1 32.8 L1011.7 31.4Z" fill="#dcd8ca" stroke="#1b1a16" stroke-width="1.1" stroke-linejoin="round" />
</g>
<path d="M1018.3 30.1 L1017.8 29.1 L1017.7 28.1 L1018.2 27.1 L1019.1 26.3 L1020.4 25.7 L1022 25.3 L1023.8 25.1 L1025.6 25.3 L1027.3 25.7 L1028.8 26.3 L1030 27.1 L1030.8 28.1 L1031.1 29.1 L1030.8 30.1 L1030.2 31 L1029 31.7 L1027.6 32.2 L1025.9 32.5 L1024 32.5 L1022.2 32.2 L1020.6 31.7 L1019.3 31 L1018.3 30.1Z" fill="#8f8d86" stroke="#1b1a16" stroke-width="1.1" stroke-linejoin="round" />
<g clip-path="url(#cbh2)">
<path d="M1017.9 34.1 L1017.4 33.1 L1017.4 32.1 L1017.8 31.2 L1018.7 30.4 L1020 29.7 L1021.6 29.3 L1023.4 29.2 L1025.2 29.3 L1026.9 29.7 L1028.5 30.4 L1029.6 31.2 L1030.4 32.1 L1030.7 33.1 L1030.5 34.1 L1029.8 35 L1028.7 35.8 L1027.2 36.3 L1025.5 36.6 L1023.7 36.6 L1021.9 36.3 L1020.3 35.8 L1018.9 35 L1017.9 34.1Z" fill="#b9b7af" stroke="#1b1a16" stroke-width="1.0" stroke-linejoin="round" />
</g>
<path d="M1012 27.8 L1011.1 26.3 L1010.8 24.7 L1011 23.2 L1011.8 21.8 L1013.1 20.5 L1014.9 19.3 L1017 18.5 L1019.5 17.9 L1022.2 17.6 L1025 17.6 L1027.8 17.9 L1030.5 18.6 L1032.9 19.5 L1035 20.6 L1036.7 21.9 L1037.9 23.4 L1038.5 24.9 L1038.6 26.5 L1038.1 28 L1037.1 29.4 L1035.5 30.6 L1033.5 31.6 L1031.2 32.3 L1028.5 32.8 L1025.7 32.9 L1022.9 32.8 L1020.2 32.3 L1017.6 31.5 L1015.3 30.5 L1013.4 29.2 L1012 27.8" fill="none" stroke="#1b1a16" stroke-width="1.2" stroke-linecap="round" stroke-linejoin="round" />
<path d="M1374.9 484.4 L1373.5 482.1 L1372.7 479.8 L1372.6 477.5 L1373.3 475.4 L1374.6 473.4 L1376.5 471.7 L1379 470.4 L1381.9 469.6 L1385.2 469.1 L1388.6 469.1 L1392.1 469.6 L1395.5 470.6 L1398.6 471.9 L1401.4 473.6 L1403.8 475.6 L1405.5 477.8 L1406.7 480.1 L1407.1 482.4 L1406.8 484.6 L1405.9 486.7 L1404.2 488.6 L1402 490.1 L1399.3 491.2 L1396.2 491.9 L1392.8 492.1 L1389.3 491.8 L1385.8 491.1 L1382.5 489.9 L1379.5 488.4 L1376.9 486.5 L1374.9 484.4Z" fill="#c4c0b3" stroke="#1b1a16" stroke-width="1.2" stroke-linejoin="round" />
<g clip-path="url(#cb3)">
<path d="M1374 488.2 L1372.6 486 L1371.9 483.7 L1371.8 481.4 L1372.4 479.2 L1373.8 477.2 L1375.7 475.6 L1378.2 474.3 L1381.1 473.4 L1384.3 473 L1387.7 473 L1391.2 473.5 L1394.6 474.4 L1397.8 475.7 L1400.6 477.4 L1402.9 479.4 L1404.6 481.6 L1405.8 483.9 L1406.2 486.2 L1405.9 488.5 L1405 490.6 L1403.4 492.4 L1401.1 493.9 L1398.4 495 L1395.3 495.7 L1391.9 495.9 L1388.4 495.6 L1385 494.9 L1381.7 493.8 L1378.7 492.2 L1376.1 490.3 L1374 488.2Z" fill="#dcd8ca" stroke="#1b1a16" stroke-width="1.1" stroke-linejoin="round" />
</g>
<path d="M1381.8 486.2 L1380.9 484.7 L1380.7 483.2 L1381 481.8 L1382 480.6 L1383.4 479.6 L1385.3 479 L1387.4 478.8 L1389.7 479 L1391.9 479.6 L1393.9 480.6 L1395.5 481.8 L1396.6 483.2 L1397.2 484.7 L1397.2 486.2 L1396.5 487.5 L1395.3 488.6 L1393.6 489.4 L1391.6 489.8 L1389.4 489.8 L1387.1 489.4 L1385 488.7 L1383.2 487.6 L1381.8 486.2Z" fill="#8f8d86" stroke="#1b1a16" stroke-width="1.1" stroke-linejoin="round" />
<g clip-path="url(#cbh3)">
<path d="M1380.8 490.5 L1380 489.1 L1379.7 487.6 L1380.1 486.1 L1381 484.9 L1382.5 484 L1384.3 483.4 L1386.5 483.1 L1388.7 483.3 L1390.9 483.9 L1392.9 484.9 L1394.5 486.1 L1395.6 487.5 L1396.2 489 L1396.2 490.5 L1395.5 491.8 L1394.3 492.9 L1392.7 493.7 L1390.6 494.2 L1388.4 494.2 L1386.2 493.7 L1384 493 L1382.2 491.9 L1380.8 490.5Z" fill="#b9b7af" stroke="#1b1a16" stroke-width="1.0" stroke-linejoin="round" />
</g>
<path d="M1374.9 484.4 L1373.5 482.1 L1372.7 479.8 L1372.6 477.5 L1373.3 475.4 L1374.6 473.4 L1376.5 471.7 L1379 470.4 L1381.9 469.6 L1385.2 469.1 L1388.6 469.1 L1392.1 469.6 L1395.5 470.6 L1398.6 471.9 L1401.4 473.6 L1403.8 475.6 L1405.5 477.8 L1406.7 480.1 L1407.1 482.4 L1406.8 484.6 L1405.9 486.7 L1404.2 488.6 L1402 490.1 L1399.3 491.2 L1396.2 491.9 L1392.8 492.1 L1389.3 491.8 L1385.8 491.1 L1382.5 489.9 L1379.5 488.4 L1376.9 486.5 L1374.9 484.4" fill="none" stroke="#1b1a16" stroke-width="1.2" stroke-linecap="round" stroke-linejoin="round" />
<path d="M405.2 736.8 L404.6 734 L404.7 731.2 L405.6 728.4 L407.3 725.8 L409.6 723.4 L412.4 721.4 L415.7 719.8 L419.3 718.8 L423.1 718.2 L426.8 718.3 L430.4 718.8 L433.8 720 L436.7 721.6 L439.1 723.7 L440.8 726 L441.8 728.7 L442.1 731.5 L441.6 734.3 L440.3 737 L438.4 739.6 L435.8 741.8 L432.7 743.6 L429.2 745 L425.5 745.8 L421.7 746.1 L417.9 745.7 L414.4 744.9 L411.2 743.5 L408.6 741.6 L406.5 739.3 L405.2 736.8Z" fill="#c4c0b3" stroke="#1b1a16" stroke-width="1.2" stroke-linejoin="round" />
<g clip-path="url(#cb4)">
<path d="M405.6 740.6 L405 737.9 L405.2 735.1 L406.1 732.3 L407.7 729.7 L410 727.3 L412.8 725.3 L416.1 723.7 L419.7 722.6 L423.5 722.1 L427.2 722.1 L430.8 722.7 L434.2 723.9 L437.1 725.5 L439.5 727.5 L441.2 729.9 L442.2 732.6 L442.5 735.4 L442 738.2 L440.7 740.9 L438.8 743.4 L436.2 745.7 L433.1 747.5 L429.6 748.9 L425.9 749.7 L422.1 749.9 L418.3 749.6 L414.8 748.7 L411.7 747.3 L409 745.5 L407 743.2 L405.6 740.6Z" fill="#dcd8ca" stroke="#1b1a16" stroke-width="1.1" stroke-linejoin="round" />
</g>
<path d="M415 738.2 L414.7 736.4 L415.1 734.6 L416.1 732.9 L417.6 731.4 L419.6 730.2 L421.9 729.5 L424.4 729.2 L426.8 729.5 L429 730.2 L430.7 731.3 L432 732.8 L432.7 734.5 L432.7 736.4 L432 738.2 L430.7 739.8 L428.9 741.1 L426.7 742.1 L424.3 742.6 L421.8 742.6 L419.5 742.1 L417.5 741.1 L416 739.8 L415 738.2Z" fill="#8f8d86" stroke="#1b1a16" stroke-width="1.1" stroke-linejoin="round" />
<g clip-path="url(#cbh4)">
<path d="M415.5 742.5 L415.2 740.8 L415.5 738.9 L416.5 737.2 L418.1 735.7 L420.1 734.6 L422.4 733.8 L424.8 733.6 L427.2 733.8 L429.4 734.5 L431.2 735.7 L432.5 737.2 L433.1 738.9 L433.1 740.7 L432.4 742.5 L431.1 744.1 L429.3 745.5 L427.2 746.4 L424.8 746.9 L422.3 746.9 L420 746.4 L418 745.5 L416.5 744.2 L415.5 742.5Z" fill="#b9b7af" stroke="#1b1a16" stroke-width="1.0" stroke-linejoin="round" />
</g>
<path d="M405.2 736.8 L404.6 734 L404.7 731.2 L405.6 728.4 L407.3 725.8 L409.6 723.4 L412.4 721.4 L415.7 719.8 L419.3 718.8 L423.1 718.2 L426.8 718.3 L430.4 718.8 L433.8 720 L436.7 721.6 L439.1 723.7 L440.8 726 L441.8 728.7 L442.1 731.5 L441.6 734.3 L440.3 737 L438.4 739.6 L435.8 741.8 L432.7 743.6 L429.2 745 L425.5 745.8 L421.7 746.1 L417.9 745.7 L414.4 744.9 L411.2 743.5 L408.6 741.6 L406.5 739.3 L405.2 736.8" fill="none" stroke="#1b1a16" stroke-width="1.2" stroke-linecap="round" stroke-linejoin="round" />
<path d="M407.3 751.9 L1409.8 489.7 L1411.2 489.2 L1412.4 488.6 L1413.4 487.7 L1414.1 486.7 L1414.6 485.7 L1393.5 576.1 L1393.1 577.2 L1392.4 578.2 L1391.4 579 L1390.2 579.7 L1388.8 580.2 L262 882.3 L256 882.5 L252.6 879.5 L252.6 876 L255.3 873.4 L403.8 740Z" fill="#c9c5b9" stroke="#1b1a16" stroke-width="1.5" stroke-linejoin="round" />
<path d="M78.2 288.7 L253.4 874.4" fill="none" stroke="#b9b7ae" stroke-width="2.2" stroke-linecap="round" stroke-linejoin="round" />
<path d="M194.9 172.5 L403.8 740 L255.3 873.4 L79.5 287.2Z" fill="#dbd8c9" stroke="#1b1a16" stroke-width="1.5" stroke-linejoin="round" />
</svg>
</body></html>
